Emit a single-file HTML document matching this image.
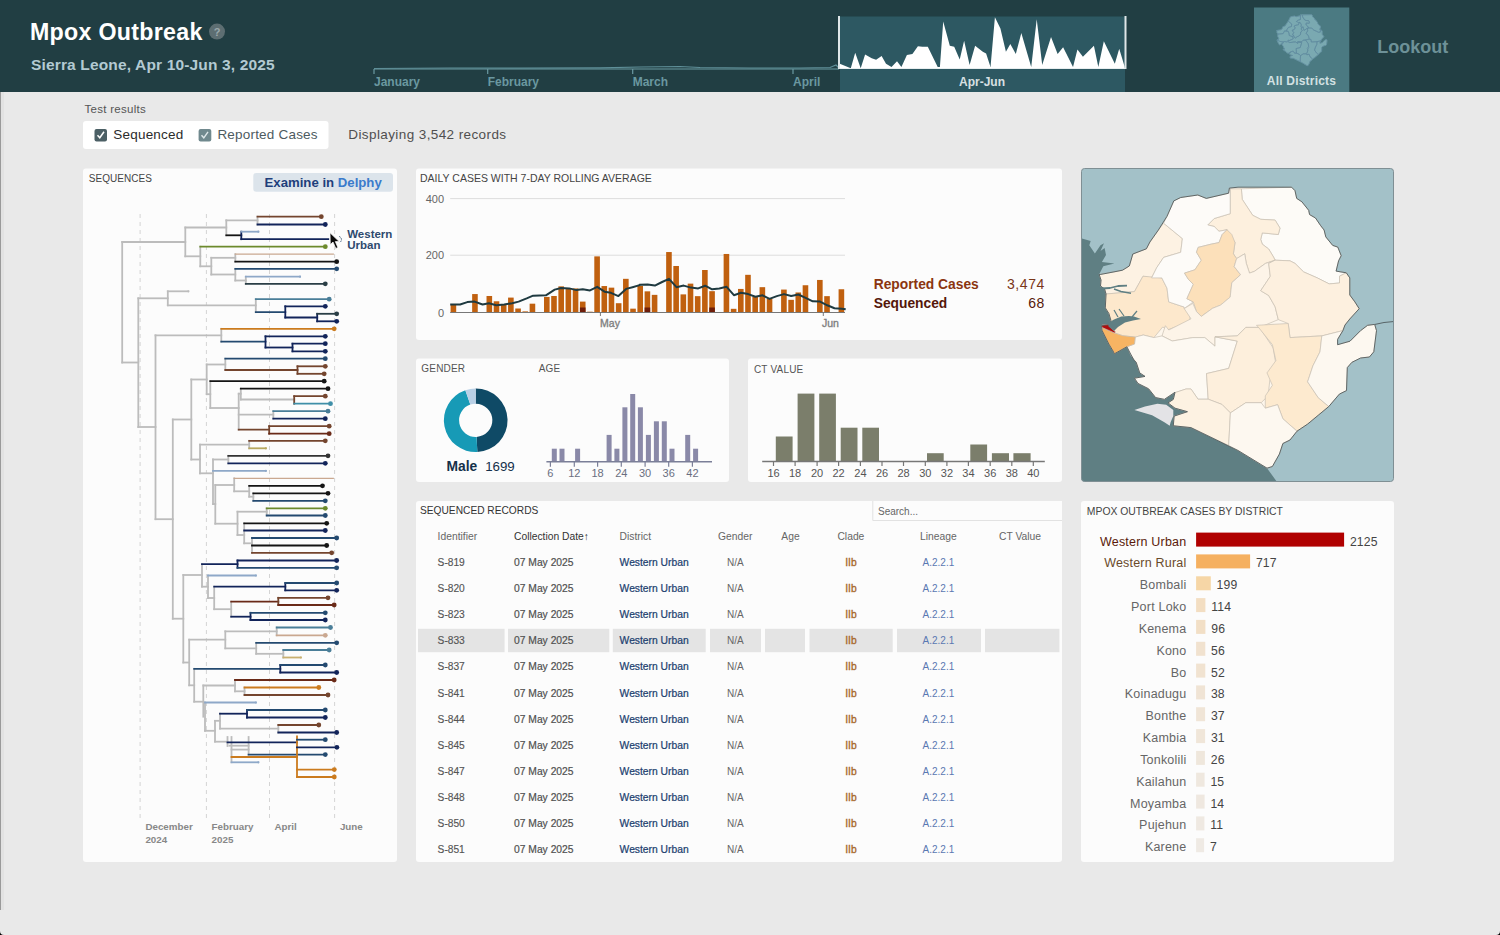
<!DOCTYPE html>
<html><head><meta charset="utf-8"><style>
html,body{margin:0;padding:0;}
body{width:1500px;height:935px;overflow:hidden;background:#e9e9e9;font-family:"Liberation Sans", sans-serif;}
svg{position:absolute;left:0;top:0;}
svg text{font-family:"Liberation Sans", sans-serif;}
</style></head><body>
<svg width="1500" height="935" viewBox="0 0 1500 935">
<rect x="0" y="0" width="1500" height="935" fill="#e9e9e9"/>
<rect x="0" y="0" width="1500" height="92" fill="#213e43"/>
<text x="30" y="39.7" font-size="23.2" fill="#ffffff" font-weight="700" letter-spacing="0.3">Mpox Outbreak</text>
<circle cx="217" cy="31.6" r="8" fill="#5d6e72"/>
<text x="217" y="36" font-size="11" fill="#9aa8ab" font-weight="700" text-anchor="middle">?</text>
<text x="31" y="70" font-size="15.5" fill="#b3cad2" font-weight="700" letter-spacing="0.15">Sierra Leone, Apr 10-Jun 3, 2025</text>
<line x1="374" y1="69" x2="839" y2="69" stroke="#6b9aa2" stroke-width="1.2"/>
<line x1="374" y1="69" x2="374" y2="74" stroke="#6b9aa2" stroke-width="1.2"/>
<line x1="487.7" y1="69" x2="487.7" y2="74" stroke="#6b9aa2" stroke-width="1.2"/>
<line x1="632.7" y1="69" x2="632.7" y2="74" stroke="#6b9aa2" stroke-width="1.2"/>
<line x1="793" y1="69" x2="793" y2="74" stroke="#6b9aa2" stroke-width="1.2"/>
<text x="374" y="85.7" font-size="12" fill="#6a98a0" font-weight="700">January</text>
<text x="487.7" y="85.7" font-size="12" fill="#6a98a0" font-weight="700">February</text>
<text x="632.7" y="85.7" font-size="12" fill="#6a98a0" font-weight="700">March</text>
<text x="793" y="85.7" font-size="12" fill="#6a98a0" font-weight="700">April</text>
<polyline points="374,68.5 450,68 520,68.2 600,67.8 640,67 680,66.5 700,67.5 750,68 800,68 830,67.5 836,65 839,68" fill="none" stroke="#5f8f98" stroke-width="1.2"/>
<rect x="840" y="16.5" width="285" height="75.5" fill="#2d5862"/>
<polygon points="839.8019801980198,68.5 839.8019801980198,63.80638063806381 850.8030803080308,68.20682068206821 855.2035203520352,52.805280528052805 860.7040704070407,68.20682068206821 865.1045104510451,54.56545654565457 871.7051705170517,58.30583058305831 876.1056105610561,59.84598459845985 881.6061606160616,56.1056105610561 886.006600660066,63.80638063806381 891.5071507150715,67.1067106710671 897.007700770077,61.16611661166117 901.4081408140814,67.1067106710671 906.908690869087,55.005500550055004 912.4092409240924,53.905390539053904 917.9097909790979,46.20462046204621 922.3102310231023,46.864686468646866 927.8107810781078,46.864686468646866 937.7117711771177,67.1067106710671 939.9119911991199,67.1067106710671 943.2123212321233,21.562156215621563 949.8129812981298,45.76457645764577 954.2134213421342,46.64466446644664 959.7139713971397,59.40594059405941 964.1144114411441,40.7040704070407 969.6149614961496,64.9064906490649 975.1155115511551,45.76457645764577 982.8162816281629,51.705170517051705 986.1166116611662,53.46534653465346 990.5170517051705,67.1067106710671 994.9174917491749,17.16171617161716 1000.4180418041805,28.602860286028605 1005.9185918591859,51.705170517051705 1010.3190319031903,44.004400440044 1015.8195819581958,53.905390539053904 1021.3201320132014,33.00330033003301 1031.221122112211,67.1067106710671 1036.7216721672166,19.36193619361936 1042.2222222222222,64.9064906490649 1051.023102310231,36.96369636963696 1057.6237623762377,53.905390539053904 1063.1243124312432,47.30473047304731 1073.0253025302532,67.1067106710671 1077.4257425742574,49.504950495049506 1082.926292629263,56.76567656765677 1093.927392739274,45.76457645764577 1098.3278327832784,67.1067106710671 1103.828382838284,41.36413641364136 1114.8294829482948,63.80638063806381 1119.2299229922992,48.84488448844885 1124.7304730473047,67.1067106710671 1124.7304730473047,68.5" fill="#ffffff"/>
<line x1="838" y1="68.5" x2="1126" y2="68.5" stroke="#e8eeef" stroke-width="1"/>
<line x1="839" y1="16" x2="839" y2="69" stroke="#dfe6e8" stroke-width="2"/>
<line x1="1125.5" y1="16" x2="1125.5" y2="69" stroke="#dfe6e8" stroke-width="2"/>
<text x="982" y="85.8" font-size="12" fill="#d8e0e2" font-weight="700" text-anchor="middle">Apr-Jun</text>
<rect x="1254" y="7.5" width="95.3" height="84.5" fill="#4b7a82"/>
<g transform="translate(1276.8,14.7) scale(0.1816,0.1815) translate(-1100,-187.2)"><polygon points="1100.2,274.5 1113.9,271.9 1122.5,270.2 1129.3,266 1132.8,254 1146.4,248.8 1149.9,242 1158.4,230 1167,216.3 1173.8,200.9 1180.7,197.5 1197.8,195 1206.3,198.4 1228.6,193.2 1229.4,188.1 1238,187.2 1291.6,187.2 1295,190.7 1296.7,198.4 1301.9,201.8 1308.7,210.3 1309.6,214.6 1315.5,218 1320.7,225.7 1324.1,230 1325.8,236.9 1332.7,245.4 1337.8,247.1 1341.2,255.7 1338.6,260.8 1336.1,271.1 1346.3,272.8 1349.8,277.9 1349.8,295 1354.9,301.9 1359.2,308.7 1349.8,319 1345,325 1342.9,330.6 1337.6,339.4 1337.6,344.7 1350,341.2 1360.6,330.6 1367.6,325.3 1374.7,324.4 1376.5,330.6 1373.8,351.8 1369.4,357 1360.6,358 1351.8,362.4 1347.3,367.6 1346.5,390.6 1339.4,394.1 1328.8,406.5 1318.2,415.3 1307.6,424.1 1297,431.2 1290,440 1282.9,443.5 1279.4,454.1 1272.4,466.5 1267,468.2 1238,450.5 1190.9,427.6 1173.3,425.8 1174.1,416.1 1187.4,411.7 1175,408.2 1168,402.9 1173.3,399.4 1175,392.3 1164.4,399.4 1155.6,397.6 1148.6,388.8 1138,383.5 1134.4,378.2 1145,376.4 1139.7,372.9 1136.2,362.3 1133.9,360 1129,351 1126.9,346.8 1114.4,353.8 1113,351 1108.8,344 1101.9,330.1 1101.5,325.5 1108.8,324.6 1110.9,320.4 1108.8,313.4 1105.3,307.9 1106,294 1104.6,289 1100.5,286 1101,280 1099.1,274.5" fill="#7aa9b1" stroke="#78a6ae" stroke-width="3"/><polygon points="1099.1,274.5 1113.9,271.9 1122.5,270.2 1129.3,266 1132.8,254 1146.4,248.8 1149.9,242 1158.4,230 1163.6,223.2 1182.4,238.6 1180.7,252.3 1163.6,257.4 1156.7,267.7 1151.6,277.9 1143,276.2 1134.5,291.6 1106,294 1104.6,289 1100.5,286 1101,280" fill="none" stroke="#5f8a9e" stroke-width="3.5"/><polygon points="1106,294 1134.5,291.6 1143,276.2 1161.8,277.9 1167,288.2 1168.7,301.9 1184.1,307 1191,313.9 1189,322 1168,329.7 1162.7,327 1153.9,337.6 1143.3,335 1135.2,337.1 1122.7,335.7 1114.4,332.9 1101.9,327.4 1101.5,325.5 1108.8,324.6 1110.9,320.4 1108.8,313.4 1105.3,307.9" fill="none" stroke="#5f8a9e" stroke-width="3.5"/><polygon points="1241.4,188.8 1291.6,187.2 1295,190.7 1296.7,198.4 1301.9,201.8 1308.7,210.3 1309.6,214.6 1315.5,218 1320.7,225.7 1324.1,230 1325.8,236.9 1332.7,245.4 1337.8,247.1 1341.2,255.7 1338.6,260.8 1336.1,271.1 1346.3,272.8 1339.5,276.2 1339.5,283 1329.2,283.9 1317.3,277.9 1303.6,271.9 1295,263.4 1289.9,260.8 1275.1,260.2 1273.5,257 1268.7,249 1262.3,244.2 1260.7,239.4 1262.3,232.9 1278.3,234.5 1280,228.1 1275.1,220.1 1260.7,219.3 1252.7,215.3 1242.2,199.3" fill="none" stroke="#5f8a9e" stroke-width="3.5"/><polygon points="1230.2,188.8 1241.4,188.8 1242.2,199.3 1252.7,215.3 1260.7,219.3 1275.1,220.1 1280,228.1 1278.3,234.5 1262.3,232.9 1260.7,239.4 1262.3,244.2 1268.7,249 1273.5,257 1275.1,260.2 1265.5,263.4 1254.3,271.4 1249.5,273.1 1246.3,263.4 1244.7,253.8 1236.6,258.6 1233.4,253.8 1235,242.6 1227,229.7 1219,231.3 1214.2,226.5 1207.8,224.9 1214.2,218.5 1230.2,213.7" fill="none" stroke="#5f8a9e" stroke-width="3.5"/><polygon points="1167,216.3 1173.8,200.9 1180.7,197.5 1197.8,195 1206.3,198.4 1228.6,193.2 1229.4,188.1 1230.2,188.8 1230.2,213.7 1214.2,218.5 1207.8,224.9 1214.2,226.5 1219,231.3 1227,229.7 1222.2,234.5 1219,242.6 1211,244.2 1198.1,247.4 1196.5,252.2 1201.3,260.2 1194.9,269.8 1184.5,273.1 1188.5,279.5 1193.3,284.3 1186.9,298.7 1193.3,301.9 1184.2,308.6 1184.1,307 1168.7,301.9 1167,288.2 1161.8,277.9 1151.6,277.9 1156.7,267.7 1163.6,257.4 1180.7,252.3 1182.4,238.6 1163.6,223.2" fill="none" stroke="#5f8a9e" stroke-width="3.5"/><polygon points="1227,229.7 1231.8,234.5 1235,242.6 1233.4,253.8 1236.6,258.6 1234.2,266.6 1240.6,274.7 1231.8,282.7 1230.2,297.1 1220.6,305.1 1212.6,308.3 1201.3,316.4 1196.5,311.6 1193.3,301.9 1186.9,298.7 1193.3,284.3 1188.5,279.5 1184.5,273.1 1194.9,269.8 1201.3,260.2 1196.5,252.2 1198.1,247.4 1211,244.2 1219,242.6 1222.2,234.5" fill="none" stroke="#5f8a9e" stroke-width="3.5"/><polygon points="1162,335.9 1165.4,325.7 1168.8,330 1191,318.8 1184.2,308.6 1192.8,303.4 1196.5,311.6 1201.3,316.4 1212.6,308.3 1220.6,305.1 1230.2,297.1 1231.8,282.7 1240.6,274.7 1234.2,266.6 1236.6,258.6 1244.7,253.8 1246.3,263.4 1249.5,273.1 1254.3,271.4 1265.5,263.4 1275.1,260.2 1268.7,263.4 1270.3,276.3 1260.7,290.7 1268.7,295.5 1275.1,306.7 1278.3,319.6 1259.5,327.4 1245.8,327.4 1237.3,335.9 1215,336.8 1215,346.2 1204.8,337.6 1192.8,337.6 1172.2,341" fill="none" stroke="#5f8a9e" stroke-width="3.5"/><polygon points="1275.1,260.2 1289.9,260.8 1295,263.4 1303.6,271.9 1317.3,277.9 1329.2,283.9 1339.5,283 1339.5,276.2 1346.3,272.8 1349.8,277.9 1349.8,295 1354.9,301.9 1359.2,308.7 1349.8,319 1345,325 1342.9,330.6 1321.8,335.9 1290,337.6 1288.2,323.5 1278.3,319.6 1275.1,306.7 1268.7,295.5 1260.7,290.7 1270.3,276.3 1268.7,263.4" fill="none" stroke="#5f8a9e" stroke-width="3.5"/><polygon points="1129,351 1126.9,346.8 1134.5,344 1135.2,337.1 1143.3,335 1153.9,337.6 1162,335.9 1172.2,341 1192.8,337.6 1204.8,337.6 1215,346.2 1215,336.8 1237.3,341.1 1228.7,368.4 1206.5,373.6 1208.2,399.2 1198,399.2 1191,389 1186,389 1175.7,392.4 1175,392.3 1164.4,399.4 1155.6,397.6 1148.6,388.8 1138,383.5 1134.4,378.2 1145,376.4 1139.7,372.9 1136.2,362.3 1130.9,355.3" fill="none" stroke="#5f8a9e" stroke-width="3.5"/><polygon points="1215,336.8 1237.3,341.1 1228.7,368.4 1206.5,373.6 1208.2,399.2 1221.9,404.4 1230.4,412.9 1245.8,402.7 1261.2,402.7 1268.1,395.8 1269.8,380.4 1276.6,368.4 1273.2,347.9 1259.5,327.4 1245.8,327.4 1237.3,335.9" fill="none" stroke="#5f8a9e" stroke-width="3.5"/><polygon points="1256.5,325.3 1288.2,323.5 1290,337.6 1321.8,335.9 1320,351.8 1312.9,365.9 1307.6,381.8 1318.2,397.6 1328.8,406.5 1318.2,415.3 1307.6,424.1 1297,431.2 1282.9,418.8 1277.6,404.7 1265.3,408.2 1265.3,395.9 1272.4,385.3 1267,372.9 1275.9,360.6 1272.4,344.7 1258.2,327" fill="none" stroke="#5f8a9e" stroke-width="3.5"/><polygon points="1321.8,335.9 1342.9,330.6 1337.6,339.4 1337.6,344.7 1350,341.2 1360.6,330.6 1367.6,325.3 1374.7,324.4 1376.5,330.6 1373.8,351.8 1369.4,357 1360.6,358 1351.8,362.4 1347.3,367.6 1346.5,390.6 1339.4,394.1 1328.8,406.5 1318.2,397.6 1307.6,381.8 1312.9,365.9 1320,351.8" fill="none" stroke="#5f8a9e" stroke-width="3.5"/><polygon points="1175.7,392.4 1186,389 1191,389 1198,399.2 1208.2,399.2 1221.9,404.4 1230.4,412.9 1228.7,445.5 1190.9,427.6 1173.3,425.8 1174.1,416.1 1187.4,411.7 1175,408.2 1168,402.9 1173.3,399.4 1175,392.3" fill="none" stroke="#5f8a9e" stroke-width="3.5"/><polygon points="1230.4,412.9 1245.8,402.7 1261.2,402.7 1265.3,408.2 1277.6,404.7 1282.9,418.8 1297,431.2 1290,440 1282.9,443.5 1279.4,454.1 1272.4,466.5 1267,468.2 1238,450.5 1228.7,445.5" fill="none" stroke="#5f8a9e" stroke-width="3.5"/><polygon points="1101.9,327.4 1114.4,332.9 1122.7,335.7 1135.2,337.1 1134.5,344 1126.9,346.8 1114.4,353.8 1113,351 1108.8,344 1101.9,330.1" fill="none" stroke="#5f8a9e" stroke-width="3.5"/></g>
<text x="1301.5" y="84.8" font-size="12" fill="#d3e1e3" font-weight="700" text-anchor="middle" letter-spacing="0.2">All Districts</text>
<text x="1412.8" y="52.8" font-size="18" fill="#6d9198" font-weight="700" text-anchor="middle">Lookout</text>
<text x="84.4" y="112.7" font-size="11.5" fill="#555555" font-weight="400" letter-spacing="0.3">Test results</text>
<rect x="83" y="121" width="245.5" height="28" rx="3" fill="#ffffff"/>
<rect x="94.5" y="129" width="12.5" height="12.5" rx="2" fill="#4b5f65"/>
<path d="M97.5 135.3 L99.8 137.8 L104 131.8" fill="none" stroke="#ffffff" stroke-width="1.5"/>
<text x="113.3" y="138.8" font-size="13.5" fill="#2b2b2b" font-weight="400" letter-spacing="0.2">Sequenced</text>
<rect x="198.6" y="129" width="12.7" height="12.5" rx="2" fill="#70898e"/>
<path d="M201.5 135.3 L203.8 137.8 L208 131.8" fill="none" stroke="#dfe8ea" stroke-width="1.4"/>
<text x="217.4" y="138.8" font-size="13.5" fill="#4d5b5f" font-weight="400" letter-spacing="0.2">Reported Cases</text>
<text x="348.3" y="138.8" font-size="13.5" fill="#4f4f4f" font-weight="400" letter-spacing="0.4">Displaying 3,542 records</text>
<rect x="83" y="168.5" width="314" height="693.5" rx="3" fill="#fcfcfc"/>
<rect x="416" y="168.5" width="646" height="171.5" rx="3" fill="#fcfcfc"/>
<rect x="416" y="358.5" width="313" height="123.5" rx="3" fill="#fcfcfc"/>
<rect x="748" y="358.5" width="314" height="123.5" rx="3" fill="#fcfcfc"/>
<rect x="416" y="501" width="646" height="361" rx="3" fill="#fcfcfc"/>
<rect x="1081" y="501" width="313" height="361" rx="3" fill="#fcfcfc"/>
<text x="88.7" y="182" font-size="10" fill="#444444" font-weight="400" letter-spacing="0.05">SEQUENCES</text>
<rect x="253.3" y="173" width="139.7" height="18.7" rx="3" fill="#dce4eb"/>
<text x="264.5" y="186.9" font-size="13.2" font-weight="700" letter-spacing="0"><tspan fill="#1f3f7c">Examine in </tspan><tspan fill="#3a7bcc">Delphy</tspan></text>
<line x1="140.1" y1="214" x2="140.1" y2="819" stroke="#d4d4d4" stroke-width="1" stroke-dasharray="4 4"/>
<line x1="206.4" y1="214" x2="206.4" y2="819" stroke="#d4d4d4" stroke-width="1" stroke-dasharray="4 4"/>
<line x1="269.5" y1="214" x2="269.5" y2="819" stroke="#d4d4d4" stroke-width="1" stroke-dasharray="4 4"/>
<line x1="334.6" y1="214" x2="334.6" y2="819" stroke="#d4d4d4" stroke-width="1" stroke-dasharray="4 4"/>
<line x1="122.2" y1="242" x2="122.2" y2="362.5" stroke="#bcbcbc" stroke-width="1.8" stroke-linecap="square"/>
<line x1="122.2" y1="242" x2="185.3" y2="242" stroke="#bcbcbc" stroke-width="1.8" stroke-linecap="square"/>
<line x1="185.3" y1="227.5" x2="185.3" y2="256.3" stroke="#bcbcbc" stroke-width="1.8" stroke-linecap="square"/>
<line x1="185.3" y1="227.5" x2="226.3" y2="227.5" stroke="#bcbcbc" stroke-width="1.8" stroke-linecap="square"/>
<line x1="226.3" y1="220.3" x2="226.3" y2="235.3" stroke="#bcbcbc" stroke-width="1.8" stroke-linecap="square"/>
<line x1="226.3" y1="220.3" x2="257.5" y2="220.3" stroke="#bcbcbc" stroke-width="1.8" stroke-linecap="square"/>
<line x1="257.5" y1="216.7" x2="257.5" y2="224.5" stroke="#bcbcbc" stroke-width="1.8" stroke-linecap="square"/>
<line x1="185.3" y1="256.3" x2="200.3" y2="256.3" stroke="#bcbcbc" stroke-width="1.8" stroke-linecap="square"/>
<line x1="200.3" y1="246.7" x2="200.3" y2="266.3" stroke="#bcbcbc" stroke-width="1.8" stroke-linecap="square"/>
<line x1="200.3" y1="266.3" x2="211.3" y2="266.3" stroke="#bcbcbc" stroke-width="1.8" stroke-linecap="square"/>
<line x1="211.3" y1="257.8" x2="211.3" y2="274.5" stroke="#bcbcbc" stroke-width="1.8" stroke-linecap="square"/>
<line x1="211.3" y1="257.8" x2="235.3" y2="257.8" stroke="#bcbcbc" stroke-width="1.8" stroke-linecap="square"/>
<line x1="235.3" y1="254.2" x2="235.3" y2="261.7" stroke="#bcbcbc" stroke-width="1.8" stroke-linecap="square"/>
<line x1="211.3" y1="274.5" x2="235.3" y2="274.5" stroke="#bcbcbc" stroke-width="1.8" stroke-linecap="square"/>
<line x1="235.3" y1="268.8" x2="235.3" y2="280.5" stroke="#bcbcbc" stroke-width="1.8" stroke-linecap="square"/>
<line x1="235.3" y1="280.5" x2="245.8" y2="280.5" stroke="#bcbcbc" stroke-width="1.8" stroke-linecap="square"/>
<line x1="245.8" y1="276.7" x2="245.8" y2="283.8" stroke="#bcbcbc" stroke-width="1.8" stroke-linecap="square"/>
<line x1="122.2" y1="362.5" x2="138.3" y2="362.5" stroke="#bcbcbc" stroke-width="1.8" stroke-linecap="square"/>
<line x1="138.3" y1="298.3" x2="138.3" y2="427" stroke="#bcbcbc" stroke-width="1.8" stroke-linecap="square"/>
<line x1="138.3" y1="298.3" x2="167.8" y2="298.3" stroke="#bcbcbc" stroke-width="1.8" stroke-linecap="square"/>
<line x1="167.8" y1="291.3" x2="167.8" y2="305.3" stroke="#bcbcbc" stroke-width="1.8" stroke-linecap="square"/>
<line x1="167.8" y1="291.3" x2="188.3" y2="291.3" stroke="#bcbcbc" stroke-width="1.8" stroke-linecap="square"/>
<line x1="167.8" y1="305.3" x2="255.8" y2="305.3" stroke="#bcbcbc" stroke-width="1.8" stroke-linecap="square"/>
<line x1="255.8" y1="299.2" x2="255.8" y2="312.2" stroke="#bcbcbc" stroke-width="1.8" stroke-linecap="square"/>
<line x1="138.3" y1="427" x2="155.5" y2="427" stroke="#bcbcbc" stroke-width="1.8" stroke-linecap="square"/>
<line x1="155.5" y1="335.3" x2="155.5" y2="519.2" stroke="#bcbcbc" stroke-width="1.8" stroke-linecap="square"/>
<line x1="155.5" y1="335.3" x2="221.3" y2="335.3" stroke="#bcbcbc" stroke-width="1.8" stroke-linecap="square"/>
<line x1="221.3" y1="328.8" x2="221.3" y2="341.7" stroke="#bcbcbc" stroke-width="1.8" stroke-linecap="square"/>
<line x1="155.5" y1="519.2" x2="172.8" y2="519.2" stroke="#bcbcbc" stroke-width="1.8" stroke-linecap="square"/>
<line x1="172.8" y1="419.5" x2="172.8" y2="618.7" stroke="#bcbcbc" stroke-width="1.8" stroke-linecap="square"/>
<line x1="172.8" y1="419.5" x2="191.3" y2="419.5" stroke="#bcbcbc" stroke-width="1.8" stroke-linecap="square"/>
<line x1="191.3" y1="379.5" x2="191.3" y2="459.5" stroke="#bcbcbc" stroke-width="1.8" stroke-linecap="square"/>
<line x1="191.3" y1="379.5" x2="206.7" y2="379.5" stroke="#bcbcbc" stroke-width="1.8" stroke-linecap="square"/>
<line x1="206.7" y1="364.5" x2="206.7" y2="394.2" stroke="#bcbcbc" stroke-width="1.8" stroke-linecap="square"/>
<line x1="206.7" y1="364.5" x2="225.3" y2="364.5" stroke="#bcbcbc" stroke-width="1.8" stroke-linecap="square"/>
<line x1="225.3" y1="358.7" x2="225.3" y2="370" stroke="#bcbcbc" stroke-width="1.8" stroke-linecap="square"/>
<line x1="206.7" y1="394.2" x2="210.3" y2="394.2" stroke="#bcbcbc" stroke-width="1.8" stroke-linecap="square"/>
<line x1="210.3" y1="381.2" x2="210.3" y2="408" stroke="#bcbcbc" stroke-width="1.8" stroke-linecap="square"/>
<line x1="210.3" y1="408" x2="238.7" y2="408" stroke="#bcbcbc" stroke-width="1.8" stroke-linecap="square"/>
<line x1="238.7" y1="393.7" x2="238.7" y2="429.7" stroke="#bcbcbc" stroke-width="1.8" stroke-linecap="square"/>
<line x1="240.8" y1="388.7" x2="240.8" y2="399.5" stroke="#bcbcbc" stroke-width="1.8" stroke-linecap="square"/>
<line x1="238.7" y1="393.7" x2="240.8" y2="393.7" stroke="#bcbcbc" stroke-width="1.8" stroke-linecap="square"/>
<line x1="240.8" y1="399.5" x2="294.2" y2="399.5" stroke="#bcbcbc" stroke-width="1.8" stroke-linecap="square"/>
<line x1="238.7" y1="414.7" x2="273.3" y2="414.7" stroke="#bcbcbc" stroke-width="1.8" stroke-linecap="square"/>
<line x1="273.3" y1="411.2" x2="273.3" y2="418.7" stroke="#bcbcbc" stroke-width="1.8" stroke-linecap="square"/>
<line x1="191.3" y1="459.5" x2="200" y2="459.5" stroke="#bcbcbc" stroke-width="1.8" stroke-linecap="square"/>
<line x1="200" y1="444.7" x2="200" y2="473.3" stroke="#bcbcbc" stroke-width="1.8" stroke-linecap="square"/>
<line x1="200" y1="444.7" x2="249.2" y2="444.7" stroke="#bcbcbc" stroke-width="1.8" stroke-linecap="square"/>
<line x1="249.2" y1="440.8" x2="249.2" y2="448.3" stroke="#bcbcbc" stroke-width="1.8" stroke-linecap="square"/>
<line x1="200" y1="473.3" x2="213" y2="473.3" stroke="#bcbcbc" stroke-width="1.8" stroke-linecap="square"/>
<line x1="213" y1="459.5" x2="213" y2="504" stroke="#bcbcbc" stroke-width="1.8" stroke-linecap="square"/>
<line x1="213" y1="459.5" x2="228.3" y2="459.5" stroke="#bcbcbc" stroke-width="1.8" stroke-linecap="square"/>
<line x1="228.3" y1="455.8" x2="228.3" y2="463.3" stroke="#bcbcbc" stroke-width="1.8" stroke-linecap="square"/>
<line x1="213" y1="504" x2="215.3" y2="504" stroke="#bcbcbc" stroke-width="1.8" stroke-linecap="square"/>
<line x1="215.3" y1="485" x2="215.3" y2="523.7" stroke="#bcbcbc" stroke-width="1.8" stroke-linecap="square"/>
<line x1="215.3" y1="485" x2="234.2" y2="485" stroke="#bcbcbc" stroke-width="1.8" stroke-linecap="square"/>
<line x1="234.2" y1="478.3" x2="234.2" y2="491.3" stroke="#bcbcbc" stroke-width="1.8" stroke-linecap="square"/>
<line x1="234.2" y1="491.3" x2="249.2" y2="491.3" stroke="#bcbcbc" stroke-width="1.8" stroke-linecap="square"/>
<line x1="249.2" y1="485.8" x2="249.2" y2="496.7" stroke="#bcbcbc" stroke-width="1.8" stroke-linecap="square"/>
<line x1="249.2" y1="496.7" x2="253.3" y2="496.7" stroke="#bcbcbc" stroke-width="1.8" stroke-linecap="square"/>
<line x1="253.3" y1="493.3" x2="253.3" y2="500.8" stroke="#bcbcbc" stroke-width="1.8" stroke-linecap="square"/>
<line x1="215.3" y1="523.7" x2="237.5" y2="523.7" stroke="#bcbcbc" stroke-width="1.8" stroke-linecap="square"/>
<line x1="237.5" y1="511.7" x2="237.5" y2="535" stroke="#bcbcbc" stroke-width="1.8" stroke-linecap="square"/>
<line x1="237.5" y1="511.7" x2="266.7" y2="511.7" stroke="#bcbcbc" stroke-width="1.8" stroke-linecap="square"/>
<line x1="266.7" y1="508.3" x2="266.7" y2="515.5" stroke="#bcbcbc" stroke-width="1.8" stroke-linecap="square"/>
<line x1="237.5" y1="535" x2="244.2" y2="535" stroke="#bcbcbc" stroke-width="1.8" stroke-linecap="square"/>
<line x1="244.2" y1="523.3" x2="244.2" y2="543.3" stroke="#bcbcbc" stroke-width="1.8" stroke-linecap="square"/>
<line x1="244.2" y1="543.3" x2="252" y2="543.3" stroke="#bcbcbc" stroke-width="1.8" stroke-linecap="square"/>
<line x1="252" y1="538" x2="252" y2="552.8" stroke="#bcbcbc" stroke-width="1.8" stroke-linecap="square"/>
<line x1="172.8" y1="618.7" x2="183.3" y2="618.7" stroke="#bcbcbc" stroke-width="1.8" stroke-linecap="square"/>
<line x1="183.3" y1="575" x2="183.3" y2="662.5" stroke="#bcbcbc" stroke-width="1.8" stroke-linecap="square"/>
<line x1="183.3" y1="575" x2="202" y2="575" stroke="#bcbcbc" stroke-width="1.8" stroke-linecap="square"/>
<line x1="202" y1="564.2" x2="202" y2="586.7" stroke="#bcbcbc" stroke-width="1.8" stroke-linecap="square"/>
<line x1="202" y1="586.7" x2="208" y2="586.7" stroke="#bcbcbc" stroke-width="1.8" stroke-linecap="square"/>
<line x1="208" y1="575.5" x2="208" y2="598" stroke="#bcbcbc" stroke-width="1.8" stroke-linecap="square"/>
<line x1="208" y1="598" x2="214.2" y2="598" stroke="#bcbcbc" stroke-width="1.8" stroke-linecap="square"/>
<line x1="214.2" y1="586.7" x2="214.2" y2="609.2" stroke="#bcbcbc" stroke-width="1.8" stroke-linecap="square"/>
<line x1="214.2" y1="609.2" x2="231.2" y2="609.2" stroke="#bcbcbc" stroke-width="1.8" stroke-linecap="square"/>
<line x1="231.2" y1="601.7" x2="231.2" y2="616.7" stroke="#bcbcbc" stroke-width="1.8" stroke-linecap="square"/>
<line x1="183.3" y1="662.5" x2="189.2" y2="662.5" stroke="#bcbcbc" stroke-width="1.8" stroke-linecap="square"/>
<line x1="189.2" y1="639.7" x2="189.2" y2="685.3" stroke="#bcbcbc" stroke-width="1.8" stroke-linecap="square"/>
<line x1="189.2" y1="639.7" x2="225.3" y2="639.7" stroke="#bcbcbc" stroke-width="1.8" stroke-linecap="square"/>
<line x1="225.3" y1="631.3" x2="225.3" y2="648.3" stroke="#bcbcbc" stroke-width="1.8" stroke-linecap="square"/>
<line x1="225.3" y1="631.3" x2="276.7" y2="631.3" stroke="#bcbcbc" stroke-width="1.8" stroke-linecap="square"/>
<line x1="276.7" y1="627.5" x2="276.7" y2="635.3" stroke="#bcbcbc" stroke-width="1.8" stroke-linecap="square"/>
<line x1="225.3" y1="648.3" x2="256.2" y2="648.3" stroke="#bcbcbc" stroke-width="1.8" stroke-linecap="square"/>
<line x1="256.2" y1="642.8" x2="256.2" y2="653.8" stroke="#bcbcbc" stroke-width="1.8" stroke-linecap="square"/>
<line x1="256.2" y1="653.8" x2="283.3" y2="653.8" stroke="#bcbcbc" stroke-width="1.8" stroke-linecap="square"/>
<line x1="283.3" y1="650" x2="283.3" y2="657.5" stroke="#bcbcbc" stroke-width="1.8" stroke-linecap="square"/>
<line x1="189.2" y1="685.3" x2="194.2" y2="685.3" stroke="#bcbcbc" stroke-width="1.8" stroke-linecap="square"/>
<line x1="194.2" y1="668.8" x2="194.2" y2="701.7" stroke="#bcbcbc" stroke-width="1.8" stroke-linecap="square"/>
<line x1="194.2" y1="701.7" x2="203.3" y2="701.7" stroke="#bcbcbc" stroke-width="1.8" stroke-linecap="square"/>
<line x1="203.3" y1="685.5" x2="203.3" y2="716.7" stroke="#bcbcbc" stroke-width="1.8" stroke-linecap="square"/>
<line x1="205" y1="702.5" x2="205" y2="730.8" stroke="#bcbcbc" stroke-width="1.8" stroke-linecap="square"/>
<line x1="203.3" y1="685.5" x2="235" y2="685.5" stroke="#bcbcbc" stroke-width="1.8" stroke-linecap="square"/>
<line x1="235" y1="680" x2="235" y2="691.3" stroke="#bcbcbc" stroke-width="1.8" stroke-linecap="square"/>
<line x1="235" y1="691.3" x2="244.5" y2="691.3" stroke="#bcbcbc" stroke-width="1.8" stroke-linecap="square"/>
<line x1="244.5" y1="687.5" x2="244.5" y2="695" stroke="#bcbcbc" stroke-width="1.8" stroke-linecap="square"/>
<line x1="205" y1="730.8" x2="215" y2="730.8" stroke="#bcbcbc" stroke-width="1.8" stroke-linecap="square"/>
<line x1="215" y1="720.8" x2="215" y2="741.7" stroke="#bcbcbc" stroke-width="1.8" stroke-linecap="square"/>
<line x1="215" y1="720.8" x2="220" y2="720.8" stroke="#bcbcbc" stroke-width="1.8" stroke-linecap="square"/>
<line x1="220" y1="713.7" x2="220" y2="728.7" stroke="#bcbcbc" stroke-width="1.8" stroke-linecap="square"/>
<line x1="220" y1="728.7" x2="278.3" y2="728.7" stroke="#bcbcbc" stroke-width="1.8" stroke-linecap="square"/>
<line x1="278.3" y1="725" x2="278.3" y2="732.5" stroke="#bcbcbc" stroke-width="1.8" stroke-linecap="square"/>
<line x1="215" y1="741.7" x2="227.5" y2="741.7" stroke="#bcbcbc" stroke-width="1.8" stroke-linecap="square"/>
<line x1="227.5" y1="737" x2="227.5" y2="746" stroke="#bcbcbc" stroke-width="1.8" stroke-linecap="square"/>
<line x1="231.5" y1="737" x2="231.5" y2="762.3" stroke="#bcbcbc" stroke-width="1.8" stroke-linecap="square"/>
<line x1="248.6" y1="737" x2="248.6" y2="754.6" stroke="#bcbcbc" stroke-width="1.8" stroke-linecap="square"/>
<line x1="229.5" y1="745.7" x2="248.6" y2="745.7" stroke="#bcbcbc" stroke-width="1.8" stroke-linecap="square"/>
<line x1="231.5" y1="749.6" x2="248.6" y2="749.6" stroke="#bcbcbc" stroke-width="1.8" stroke-linecap="square"/>
<line x1="257.5" y1="216.7" x2="321.3" y2="216.7" stroke="#74452e" stroke-width="1.8" stroke-linecap="square"/>
<line x1="257.5" y1="224.5" x2="325.3" y2="224.5" stroke="#12245a" stroke-width="1.8" stroke-linecap="square"/>
<line x1="226.3" y1="235.3" x2="241.3" y2="235.3" stroke="#141414" stroke-width="1.8" stroke-linecap="square"/>
<line x1="241.3" y1="231.7" x2="241.3" y2="239.2" stroke="#12245a" stroke-width="1.8" stroke-linecap="square"/>
<line x1="241.3" y1="231.7" x2="258.3" y2="231.7" stroke="#8ea8c8" stroke-width="1.8" stroke-linecap="square"/>
<line x1="241.3" y1="239.2" x2="328.3" y2="239.2" stroke="#12245a" stroke-width="1.8" stroke-linecap="square"/>
<line x1="200.3" y1="246.7" x2="325.3" y2="246.7" stroke="#6c8a2c" stroke-width="1.8" stroke-linecap="square"/>
<line x1="235.3" y1="254.2" x2="333.3" y2="254.2" stroke="#caa890" stroke-width="1.2" stroke-linecap="square"/>
<line x1="235.3" y1="261.7" x2="336.7" y2="261.7" stroke="#141414" stroke-width="1.8" stroke-linecap="square"/>
<line x1="235.3" y1="268.8" x2="336.7" y2="268.8" stroke="#244a70" stroke-width="1.8" stroke-linecap="square"/>
<line x1="245.8" y1="276.7" x2="300" y2="276.7" stroke="#8ea8c8" stroke-width="1.8" stroke-linecap="square"/>
<line x1="245.8" y1="283.8" x2="325.3" y2="283.8" stroke="#2a3e46" stroke-width="1.8" stroke-linecap="square"/>
<line x1="255.8" y1="299.2" x2="329.2" y2="299.2" stroke="#4a7e98" stroke-width="1.8" stroke-linecap="square"/>
<line x1="255.8" y1="312.2" x2="285.3" y2="312.2" stroke="#244a70" stroke-width="1.8" stroke-linecap="square"/>
<line x1="285.3" y1="306.3" x2="285.3" y2="317.5" stroke="#12245a" stroke-width="1.8" stroke-linecap="square"/>
<line x1="285.3" y1="306.3" x2="325.3" y2="306.3" stroke="#12245a" stroke-width="1.8" stroke-linecap="square"/>
<line x1="285.3" y1="317.5" x2="317.2" y2="317.5" stroke="#12245a" stroke-width="1.8" stroke-linecap="square"/>
<line x1="317.2" y1="313.8" x2="317.2" y2="321.3" stroke="#12245a" stroke-width="1.8" stroke-linecap="square"/>
<line x1="317.2" y1="313.8" x2="336.7" y2="313.8" stroke="#2a3e46" stroke-width="1.8" stroke-linecap="square"/>
<line x1="317.2" y1="321.3" x2="336.7" y2="321.3" stroke="#12245a" stroke-width="1.8" stroke-linecap="square"/>
<line x1="221.3" y1="328.8" x2="334.2" y2="328.8" stroke="#cb7b1e" stroke-width="1.8" stroke-linecap="square"/>
<line x1="221.3" y1="341.7" x2="265.5" y2="341.7" stroke="#244a70" stroke-width="1.8" stroke-linecap="square"/>
<line x1="265.5" y1="336.3" x2="265.5" y2="347.5" stroke="#12245a" stroke-width="1.8" stroke-linecap="square"/>
<line x1="265.5" y1="336.3" x2="325.3" y2="336.3" stroke="#12245a" stroke-width="1.8" stroke-linecap="square"/>
<line x1="265.5" y1="347.5" x2="292.5" y2="347.5" stroke="#12245a" stroke-width="1.8" stroke-linecap="square"/>
<line x1="292.5" y1="343.7" x2="292.5" y2="351.3" stroke="#12245a" stroke-width="1.8" stroke-linecap="square"/>
<line x1="292.5" y1="343.7" x2="325.3" y2="343.7" stroke="#12245a" stroke-width="1.8" stroke-linecap="square"/>
<line x1="292.5" y1="351.3" x2="325.3" y2="351.3" stroke="#12245a" stroke-width="1.8" stroke-linecap="square"/>
<line x1="225.3" y1="358.7" x2="325.3" y2="358.7" stroke="#244a70" stroke-width="1.8" stroke-linecap="square"/>
<line x1="225.3" y1="370" x2="297.5" y2="370" stroke="#74452e" stroke-width="1.8" stroke-linecap="square"/>
<line x1="297.5" y1="366.3" x2="297.5" y2="373.8" stroke="#74452e" stroke-width="1.8" stroke-linecap="square"/>
<line x1="297.5" y1="366.3" x2="325.3" y2="366.3" stroke="#74452e" stroke-width="1.8" stroke-linecap="square"/>
<line x1="297.5" y1="373.8" x2="324.2" y2="373.8" stroke="#74452e" stroke-width="1.8" stroke-linecap="square"/>
<line x1="210.3" y1="381.2" x2="324.2" y2="381.2" stroke="#141414" stroke-width="1.8" stroke-linecap="square"/>
<line x1="240.8" y1="388.7" x2="328" y2="388.7" stroke="#141414" stroke-width="1.8" stroke-linecap="square"/>
<line x1="294.2" y1="396.2" x2="294.2" y2="403.7" stroke="#74452e" stroke-width="1.8" stroke-linecap="square"/>
<line x1="294.2" y1="396.2" x2="325.3" y2="396.2" stroke="#74452e" stroke-width="1.8" stroke-linecap="square"/>
<line x1="294.2" y1="403.7" x2="330.5" y2="403.7" stroke="#3f8fa8" stroke-width="1.8" stroke-linecap="square"/>
<line x1="273.3" y1="411.2" x2="328" y2="411.2" stroke="#4a7e98" stroke-width="1.8" stroke-linecap="square"/>
<line x1="273.3" y1="418.7" x2="325.3" y2="418.7" stroke="#12245a" stroke-width="1.8" stroke-linecap="square"/>
<line x1="238.7" y1="429.7" x2="269.2" y2="429.7" stroke="#74452e" stroke-width="1.8" stroke-linecap="square"/>
<line x1="269.2" y1="426.2" x2="269.2" y2="433.7" stroke="#74452e" stroke-width="1.8" stroke-linecap="square"/>
<line x1="269.2" y1="426.2" x2="329.2" y2="426.2" stroke="#74452e" stroke-width="1.8" stroke-linecap="square"/>
<line x1="269.2" y1="433.7" x2="329.2" y2="433.7" stroke="#6a2a18" stroke-width="1.8" stroke-linecap="square"/>
<line x1="249.2" y1="440.8" x2="325.3" y2="440.8" stroke="#74452e" stroke-width="1.8" stroke-linecap="square"/>
<line x1="249.2" y1="448.3" x2="265.8" y2="448.3" stroke="#b8a860" stroke-width="1.8" stroke-linecap="square"/>
<line x1="228.3" y1="455.8" x2="328" y2="455.8" stroke="#333333" stroke-width="1.8" stroke-linecap="square"/>
<line x1="228.3" y1="463.3" x2="325.3" y2="463.3" stroke="#12245a" stroke-width="1.8" stroke-linecap="square"/>
<line x1="213" y1="470.8" x2="265.8" y2="470.8" stroke="#8ea8c8" stroke-width="1.8" stroke-linecap="square"/>
<line x1="234.2" y1="478.3" x2="333.3" y2="478.3" stroke="#caa890" stroke-width="1.2" stroke-linecap="square"/>
<line x1="249.2" y1="485.8" x2="322.5" y2="485.8" stroke="#141414" stroke-width="1.8" stroke-linecap="square"/>
<line x1="253.3" y1="493.3" x2="328" y2="493.3" stroke="#141414" stroke-width="1.8" stroke-linecap="square"/>
<line x1="253.3" y1="500.8" x2="325.3" y2="500.8" stroke="#244a70" stroke-width="1.8" stroke-linecap="square"/>
<line x1="266.7" y1="508.3" x2="325.3" y2="508.3" stroke="#6c8a2c" stroke-width="1.8" stroke-linecap="square"/>
<line x1="266.7" y1="515.5" x2="325.3" y2="515.5" stroke="#244a70" stroke-width="1.8" stroke-linecap="square"/>
<line x1="244.2" y1="523.3" x2="326.7" y2="523.3" stroke="#141414" stroke-width="1.8" stroke-linecap="square"/>
<line x1="244.2" y1="530.5" x2="325.3" y2="530.5" stroke="#12245a" stroke-width="1.8" stroke-linecap="square"/>
<line x1="252" y1="538" x2="336.7" y2="538" stroke="#244a70" stroke-width="1.8" stroke-linecap="square"/>
<line x1="252" y1="545.5" x2="326.7" y2="545.5" stroke="#141414" stroke-width="1.8" stroke-linecap="square"/>
<line x1="252" y1="552.8" x2="331.7" y2="552.8" stroke="#74452e" stroke-width="1.8" stroke-linecap="square"/>
<line x1="202" y1="564.2" x2="237.5" y2="564.2" stroke="#12245a" stroke-width="1.8" stroke-linecap="square"/>
<line x1="237.5" y1="560.5" x2="237.5" y2="567.8" stroke="#12245a" stroke-width="1.8" stroke-linecap="square"/>
<line x1="237.5" y1="560.5" x2="336.7" y2="560.5" stroke="#12245a" stroke-width="1.8" stroke-linecap="square"/>
<line x1="237.5" y1="567.8" x2="336.7" y2="567.8" stroke="#244a70" stroke-width="1.8" stroke-linecap="square"/>
<line x1="208" y1="575.5" x2="255.8" y2="575.5" stroke="#8ea8c8" stroke-width="1.8" stroke-linecap="square"/>
<line x1="214.2" y1="586.7" x2="285.3" y2="586.7" stroke="#12245a" stroke-width="1.8" stroke-linecap="square"/>
<line x1="285.3" y1="583" x2="285.3" y2="590.3" stroke="#12245a" stroke-width="1.8" stroke-linecap="square"/>
<line x1="285.3" y1="583" x2="336.7" y2="583" stroke="#244a70" stroke-width="1.8" stroke-linecap="square"/>
<line x1="285.3" y1="590.3" x2="336.7" y2="590.3" stroke="#12245a" stroke-width="1.8" stroke-linecap="square"/>
<line x1="231.2" y1="601.7" x2="278.3" y2="601.7" stroke="#6a2a18" stroke-width="1.8" stroke-linecap="square"/>
<line x1="278.3" y1="597.8" x2="278.3" y2="605" stroke="#74452e" stroke-width="1.8" stroke-linecap="square"/>
<line x1="278.3" y1="597.8" x2="328" y2="597.8" stroke="#74452e" stroke-width="1.8" stroke-linecap="square"/>
<line x1="278.3" y1="605" x2="334.2" y2="605" stroke="#6a2a18" stroke-width="1.8" stroke-linecap="square"/>
<line x1="231.2" y1="616.7" x2="250.5" y2="616.7" stroke="#12245a" stroke-width="1.8" stroke-linecap="square"/>
<line x1="250.5" y1="612.8" x2="250.5" y2="620" stroke="#12245a" stroke-width="1.8" stroke-linecap="square"/>
<line x1="250.5" y1="612.8" x2="325.3" y2="612.8" stroke="#244a70" stroke-width="1.8" stroke-linecap="square"/>
<line x1="250.5" y1="620" x2="325.3" y2="620" stroke="#12245a" stroke-width="1.8" stroke-linecap="square"/>
<line x1="276.7" y1="627.5" x2="330.5" y2="627.5" stroke="#4a7e98" stroke-width="1.8" stroke-linecap="square"/>
<line x1="276.7" y1="635.3" x2="325.3" y2="635.3" stroke="#caa890" stroke-width="1.8" stroke-linecap="square"/>
<line x1="256.2" y1="642.8" x2="336.7" y2="642.8" stroke="#244a70" stroke-width="1.8" stroke-linecap="square"/>
<line x1="283.3" y1="650" x2="329.2" y2="650" stroke="#4a7e98" stroke-width="1.8" stroke-linecap="square"/>
<line x1="283.3" y1="657.5" x2="300.8" y2="657.5" stroke="#c8b070" stroke-width="1.8" stroke-linecap="square"/>
<line x1="194.2" y1="668.8" x2="280.3" y2="668.8" stroke="#244a70" stroke-width="1.8" stroke-linecap="square"/>
<line x1="280.3" y1="665" x2="280.3" y2="672.5" stroke="#12245a" stroke-width="1.8" stroke-linecap="square"/>
<line x1="280.3" y1="665" x2="325.3" y2="665" stroke="#244a70" stroke-width="1.8" stroke-linecap="square"/>
<line x1="280.3" y1="672.5" x2="336.7" y2="672.5" stroke="#12245a" stroke-width="1.8" stroke-linecap="square"/>
<line x1="235" y1="680" x2="334.2" y2="680" stroke="#6a2a18" stroke-width="1.8" stroke-linecap="square"/>
<line x1="244.5" y1="687.5" x2="318.8" y2="687.5" stroke="#cb7b1e" stroke-width="1.8" stroke-linecap="square"/>
<line x1="244.5" y1="695" x2="328" y2="695" stroke="#74452e" stroke-width="1.8" stroke-linecap="square"/>
<line x1="205" y1="702.5" x2="255.8" y2="702.5" stroke="#8ea8c8" stroke-width="1.8" stroke-linecap="square"/>
<line x1="220" y1="713.7" x2="247" y2="713.7" stroke="#12245a" stroke-width="1.8" stroke-linecap="square"/>
<line x1="247" y1="710" x2="247" y2="717.5" stroke="#12245a" stroke-width="1.8" stroke-linecap="square"/>
<line x1="247" y1="710" x2="325.3" y2="710" stroke="#244a70" stroke-width="1.8" stroke-linecap="square"/>
<line x1="247" y1="717.5" x2="325.3" y2="717.5" stroke="#12245a" stroke-width="1.8" stroke-linecap="square"/>
<line x1="278.3" y1="725" x2="318.8" y2="725" stroke="#74452e" stroke-width="1.8" stroke-linecap="square"/>
<line x1="278.3" y1="732.5" x2="336.7" y2="732.5" stroke="#12245a" stroke-width="1.8" stroke-linecap="square"/>
<line x1="227.5" y1="742.3" x2="297" y2="742.3" stroke="#12245a" stroke-width="1.8" stroke-linecap="square"/>
<line x1="248.6" y1="754.6" x2="325.3" y2="754.6" stroke="#244a70" stroke-width="1.8" stroke-linecap="square"/>
<line x1="231.5" y1="757" x2="297" y2="757" stroke="#cb7b1e" stroke-width="1.8" stroke-linecap="square"/>
<line x1="231.5" y1="762.3" x2="258.3" y2="762.3" stroke="#8ea8c8" stroke-width="1.8" stroke-linecap="square"/>
<line x1="297" y1="736.5" x2="297" y2="777" stroke="#cb7b1e" stroke-width="1.8" stroke-linecap="square"/>
<line x1="297" y1="739.7" x2="325.3" y2="739.7" stroke="#244a70" stroke-width="1.8" stroke-linecap="square"/>
<line x1="297" y1="747.3" x2="336.9" y2="747.3" stroke="#12245a" stroke-width="1.8" stroke-linecap="square"/>
<line x1="297" y1="769.6" x2="334.3" y2="769.6" stroke="#cb7b1e" stroke-width="1.8" stroke-linecap="square"/>
<line x1="297" y1="777" x2="334.3" y2="777" stroke="#cb7b1e" stroke-width="1.8" stroke-linecap="square"/>
<circle cx="188.3" cy="291.3" r="1.1" fill="#bcbcbc"/>
<circle cx="321.3" cy="216.7" r="2.4" fill="#74452e"/>
<circle cx="325.3" cy="224.5" r="2.4" fill="#12245a"/>
<circle cx="258.3" cy="231.7" r="1.1" fill="#8ea8c8"/>
<circle cx="325.3" cy="246.7" r="2.4" fill="#6c8a2c"/>
<circle cx="336.7" cy="261.7" r="2.4" fill="#141414"/>
<circle cx="336.7" cy="268.8" r="2.4" fill="#244a70"/>
<circle cx="300" cy="276.7" r="1.1" fill="#8ea8c8"/>
<circle cx="325.3" cy="283.8" r="2.4" fill="#2a3e46"/>
<circle cx="329.2" cy="299.2" r="2.4" fill="#4a7e98"/>
<circle cx="325.3" cy="306.3" r="2.4" fill="#12245a"/>
<circle cx="336.7" cy="313.8" r="2.4" fill="#2a3e46"/>
<circle cx="336.7" cy="321.3" r="2.4" fill="#12245a"/>
<circle cx="334.2" cy="328.8" r="2.4" fill="#cb7b1e"/>
<circle cx="325.3" cy="336.3" r="2.4" fill="#12245a"/>
<circle cx="325.3" cy="343.7" r="2.4" fill="#12245a"/>
<circle cx="325.3" cy="351.3" r="2.4" fill="#12245a"/>
<circle cx="325.3" cy="358.7" r="2.4" fill="#244a70"/>
<circle cx="325.3" cy="366.3" r="2.4" fill="#74452e"/>
<circle cx="324.2" cy="373.8" r="2.4" fill="#74452e"/>
<circle cx="324.2" cy="381.2" r="2.4" fill="#141414"/>
<circle cx="328" cy="388.7" r="2.4" fill="#141414"/>
<circle cx="325.3" cy="396.2" r="2.4" fill="#74452e"/>
<circle cx="330.5" cy="403.7" r="2.4" fill="#3f8fa8"/>
<circle cx="328" cy="411.2" r="2.4" fill="#4a7e98"/>
<circle cx="325.3" cy="418.7" r="2.4" fill="#12245a"/>
<circle cx="329.2" cy="426.2" r="2.4" fill="#74452e"/>
<circle cx="329.2" cy="433.7" r="2.4" fill="#6a2a18"/>
<circle cx="325.3" cy="440.8" r="2.4" fill="#74452e"/>
<circle cx="265.8" cy="448.3" r="1.1" fill="#b8a860"/>
<circle cx="328" cy="455.8" r="2.4" fill="#333333"/>
<circle cx="325.3" cy="463.3" r="2.4" fill="#12245a"/>
<circle cx="265.8" cy="470.8" r="1.1" fill="#8ea8c8"/>
<circle cx="322.5" cy="485.8" r="2.4" fill="#141414"/>
<circle cx="328" cy="493.3" r="2.4" fill="#141414"/>
<circle cx="325.3" cy="500.8" r="2.4" fill="#244a70"/>
<circle cx="325.3" cy="508.3" r="2.4" fill="#6c8a2c"/>
<circle cx="325.3" cy="515.5" r="2.4" fill="#244a70"/>
<circle cx="326.7" cy="523.3" r="2.4" fill="#141414"/>
<circle cx="325.3" cy="530.5" r="2.4" fill="#12245a"/>
<circle cx="336.7" cy="538" r="2.4" fill="#244a70"/>
<circle cx="326.7" cy="545.5" r="2.4" fill="#141414"/>
<circle cx="331.7" cy="552.8" r="2.4" fill="#74452e"/>
<circle cx="336.7" cy="560.5" r="2.4" fill="#12245a"/>
<circle cx="336.7" cy="567.8" r="2.4" fill="#244a70"/>
<circle cx="255.8" cy="575.5" r="1.1" fill="#8ea8c8"/>
<circle cx="336.7" cy="583" r="2.4" fill="#244a70"/>
<circle cx="336.7" cy="590.3" r="2.4" fill="#12245a"/>
<circle cx="328" cy="597.8" r="2.4" fill="#74452e"/>
<circle cx="334.2" cy="605" r="2.4" fill="#6a2a18"/>
<circle cx="325.3" cy="612.8" r="2.4" fill="#244a70"/>
<circle cx="325.3" cy="620" r="2.4" fill="#12245a"/>
<circle cx="330.5" cy="627.5" r="2.4" fill="#4a7e98"/>
<circle cx="325.3" cy="635.3" r="2.4" fill="#caa890"/>
<circle cx="336.7" cy="642.8" r="2.4" fill="#244a70"/>
<circle cx="329.2" cy="650" r="2.4" fill="#4a7e98"/>
<circle cx="300.8" cy="657.5" r="1.1" fill="#c8b070"/>
<circle cx="325.3" cy="665" r="2.4" fill="#244a70"/>
<circle cx="336.7" cy="672.5" r="2.4" fill="#12245a"/>
<circle cx="334.2" cy="680" r="2.4" fill="#6a2a18"/>
<circle cx="318.8" cy="687.5" r="2.4" fill="#cb7b1e"/>
<circle cx="328" cy="695" r="2.4" fill="#74452e"/>
<circle cx="255.8" cy="702.5" r="1.1" fill="#8ea8c8"/>
<circle cx="325.3" cy="710" r="2.4" fill="#244a70"/>
<circle cx="325.3" cy="717.5" r="2.4" fill="#12245a"/>
<circle cx="318.8" cy="725" r="2.4" fill="#74452e"/>
<circle cx="336.7" cy="732.5" r="2.4" fill="#12245a"/>
<circle cx="325.3" cy="754.6" r="2.4" fill="#244a70"/>
<circle cx="258.3" cy="762.3" r="1.1" fill="#8ea8c8"/>
<circle cx="325.3" cy="739.7" r="2.4" fill="#244a70"/>
<circle cx="336.9" cy="747.3" r="2.4" fill="#12245a"/>
<circle cx="334.3" cy="769.6" r="2.4" fill="#cb7b1e"/>
<circle cx="334.3" cy="777" r="2.4" fill="#cb7b1e"/>
<text x="347.2" y="237.5" font-size="11.5" fill="#2e4a6e" font-weight="700">Western</text>
<text x="347.2" y="248.7" font-size="11.5" fill="#2e4a6e" font-weight="700">Urban</text>
<path d="M339.2 236.5 A3.2 3.2 0 0 1 339.5 242.5" fill="none" stroke="#3c5a78" stroke-width="1" stroke-dasharray="1.6 0.8"/>
<path d="M330 232.8 L330.3 244.6 L333 242 L335.8 248.4 L337.9 247.5 L335.3 241.6 L339.2 241.6 Z" fill="#0a0a0a" stroke="#ffffff" stroke-width="0.7" stroke-linejoin="round"/>
<text x="145.4" y="829.9" font-size="9.8" fill="#888888" font-weight="700">December</text>
<text x="145.4" y="842.6" font-size="9.8" fill="#888888" font-weight="700">2024</text>
<text x="211.6" y="829.9" font-size="9.8" fill="#888888" font-weight="700">February</text>
<text x="211.6" y="842.6" font-size="9.8" fill="#888888" font-weight="700">2025</text>
<text x="274.5" y="829.9" font-size="9.8" fill="#888888" font-weight="700">April</text>
<text x="339.9" y="829.9" font-size="9.8" fill="#888888" font-weight="700">June</text>
<text x="420" y="181.5" font-size="10.5" fill="#444444" font-weight="400">DAILY CASES WITH 7-DAY ROLLING AVERAGE</text>
<line x1="450.2" y1="198.6" x2="845" y2="198.6" stroke="#dddddd" stroke-width="1"/>
<text x="444" y="202.6" font-size="11" fill="#666666" font-weight="400" text-anchor="end">400</text>
<line x1="450.2" y1="255.2" x2="845" y2="255.2" stroke="#dddddd" stroke-width="1"/>
<text x="444" y="259.2" font-size="11" fill="#666666" font-weight="400" text-anchor="end">200</text>
<text x="444" y="316.5" font-size="11" fill="#666666" font-weight="400" text-anchor="end">0</text>
<rect x="450.60" y="304.49" width="5.6" height="8.01" fill="#c0600f"/>
<rect x="472.15" y="294.06" width="5.6" height="18.44" fill="#c0600f"/>
<rect x="486.52" y="295.99" width="5.6" height="16.51" fill="#c0600f"/>
<rect x="493.71" y="301.28" width="5.6" height="11.22" fill="#c0600f"/>
<rect x="500.89" y="304.01" width="5.6" height="8.49" fill="#c0600f"/>
<rect x="508.08" y="297.59" width="5.6" height="14.91" fill="#c0600f"/>
<rect x="515.26" y="308.50" width="5.6" height="4.00" fill="#c0600f"/>
<rect x="522.45" y="311.38" width="5.6" height="1.12" fill="#c0600f"/>
<rect x="529.63" y="303.68" width="5.6" height="8.82" fill="#c0600f"/>
<rect x="544.00" y="296.95" width="5.6" height="15.55" fill="#c0600f"/>
<rect x="551.19" y="295.99" width="5.6" height="16.51" fill="#c0600f"/>
<rect x="558.38" y="286.36" width="5.6" height="26.14" fill="#c0600f"/>
<rect x="565.56" y="288.93" width="5.6" height="23.57" fill="#c0600f"/>
<rect x="572.75" y="288.45" width="5.6" height="24.05" fill="#c0600f"/>
<rect x="579.93" y="301.60" width="5.6" height="10.90" fill="#c0600f"/>
<rect x="587.12" y="311.70" width="5.6" height="0.80" fill="#c0600f"/>
<rect x="594.30" y="256.37" width="5.6" height="56.13" fill="#c0600f"/>
<rect x="601.49" y="286.04" width="5.6" height="26.46" fill="#c0600f"/>
<rect x="608.67" y="287.65" width="5.6" height="24.85" fill="#c0600f"/>
<rect x="615.86" y="303.20" width="5.6" height="9.30" fill="#c0600f"/>
<rect x="623.04" y="278.83" width="5.6" height="33.67" fill="#c0600f"/>
<rect x="630.23" y="308.66" width="5.6" height="3.84" fill="#c0600f"/>
<rect x="637.41" y="285.88" width="5.6" height="26.62" fill="#c0600f"/>
<rect x="644.60" y="291.34" width="5.6" height="21.16" fill="#c0600f"/>
<rect x="651.78" y="294.86" width="5.6" height="17.64" fill="#c0600f"/>
<rect x="666.15" y="252.04" width="5.6" height="60.46" fill="#c0600f"/>
<rect x="673.34" y="265.99" width="5.6" height="46.51" fill="#c0600f"/>
<rect x="680.52" y="294.38" width="5.6" height="18.12" fill="#c0600f"/>
<rect x="687.71" y="283.64" width="5.6" height="28.86" fill="#c0600f"/>
<rect x="694.89" y="296.15" width="5.6" height="16.35" fill="#c0600f"/>
<rect x="702.08" y="270.00" width="5.6" height="42.50" fill="#c0600f"/>
<rect x="709.26" y="291.17" width="5.6" height="21.33" fill="#c0600f"/>
<rect x="723.63" y="253.97" width="5.6" height="58.53" fill="#c0600f"/>
<rect x="730.82" y="308.82" width="5.6" height="3.68" fill="#c0600f"/>
<rect x="738.00" y="288.93" width="5.6" height="23.57" fill="#c0600f"/>
<rect x="745.18" y="274.82" width="5.6" height="37.68" fill="#c0600f"/>
<rect x="752.37" y="296.79" width="5.6" height="15.71" fill="#c0600f"/>
<rect x="759.56" y="287.17" width="5.6" height="25.33" fill="#c0600f"/>
<rect x="766.74" y="298.87" width="5.6" height="13.63" fill="#c0600f"/>
<rect x="781.11" y="289.57" width="5.6" height="22.93" fill="#c0600f"/>
<rect x="788.30" y="299.84" width="5.6" height="12.66" fill="#c0600f"/>
<rect x="795.48" y="292.46" width="5.6" height="20.04" fill="#c0600f"/>
<rect x="802.66" y="285.24" width="5.6" height="27.26" fill="#c0600f"/>
<rect x="817.04" y="279.95" width="5.6" height="32.55" fill="#c0600f"/>
<rect x="824.22" y="296.15" width="5.6" height="16.35" fill="#c0600f"/>
<rect x="838.59" y="289.25" width="5.6" height="23.25" fill="#c0600f"/>
<rect x="579.93" y="307.5" width="5.6" height="5" fill="#6e1d0a"/>
<rect x="644.60" y="307.5" width="5.6" height="5" fill="#6e1d0a"/>
<rect x="709.26" y="307.5" width="5.6" height="5" fill="#6e1d0a"/>
<line x1="450.2" y1="312.5" x2="845" y2="312.5" stroke="#777" stroke-width="1"/>
<polyline points="450.2,304.5 460.1,304.5 467.3,302.1 474.5,301.6 482.6,304.5 489.0,303.2 496.2,305.3 504.2,304.5 512.2,303.2 518.6,301.6 526.7,298.4 533.1,295.7 545.9,295.3 554.7,289.6 561.1,288.0 569.2,288.4 576.4,290.1 582.8,289.3 590.0,290.4 597.2,286.8 604.5,291.7 610.9,292.8 618.4,296.1 626.1,288.9 632.5,287.2 640.5,284.9 639.6,284.8 647.6,284.4 654.9,285.6 662.1,282.0 669.0,278.8 676.5,287.2 683.7,285.6 690.9,287.6 698.2,288.4 705.1,285.7 712.1,289.3 719.3,288.4 726.6,286.8 733.9,295.2 741.0,292.8 748.2,294.1 755.4,296.8 762.6,295.3 769.5,298.9 776.8,296.1 784.0,294.1 791.2,296.0 798.4,294.5 805.6,297.8 812.8,301.3 820.1,301.6 827.3,305.3 834.5,308.2 841.7,308.8 845.7,309.3" fill="none" stroke="#1f3a40" stroke-width="2" stroke-linejoin="round"/>
<line x1="600.4" y1="312.5" x2="600.4" y2="316" stroke="#777" stroke-width="1"/>
<line x1="823.3" y1="312.5" x2="823.3" y2="316" stroke="#777" stroke-width="1"/>
<text x="600.1" y="326.6" font-size="10.5" fill="#808080" font-weight="400" stroke="#808080" stroke-width="0.35">May</text>
<text x="822" y="326.6" font-size="10.5" fill="#808080" font-weight="400" stroke="#808080" stroke-width="0.35">Jun</text>
<text x="873.7" y="289" font-size="13.8" fill="#8b3510" font-weight="700">Reported Cases</text>
<text x="1045" y="289.3" font-size="14" fill="#7a3618" font-weight="400" text-anchor="end" letter-spacing="0.6">3,474</text>
<text x="873.7" y="307.6" font-size="13.8" fill="#55170a" font-weight="700">Sequenced</text>
<text x="1045" y="307.6" font-size="14" fill="#55170a" font-weight="400" text-anchor="end" letter-spacing="0.6">68</text>
<text x="421.3" y="372" font-size="10" fill="#555555" font-weight="400" letter-spacing="0.2">GENDER</text>
<text x="538.7" y="372" font-size="10" fill="#555555" font-weight="400" letter-spacing="0.2">AGE</text>
<path d="M475.70 388.50 A31.8 31.8 0 0 1 477.36 452.06 L476.57 436.88 A16.6 16.6 0 0 0 475.70 403.70 Z" fill="#0f4a66"/>
<path d="M477.36 452.06 A31.8 31.8 0 0 1 465.35 390.23 L470.30 404.60 A16.6 16.6 0 0 0 476.57 436.88 Z" fill="#179ab6"/>
<path d="M465.35 390.23 A31.8 31.8 0 0 1 475.70 388.50 L475.70 403.70 A16.6 16.6 0 0 0 470.30 404.60 Z" fill="#b9d0e6"/>
<text x="446.5" y="470.5" font-size="13.8" fill="#14304a" font-weight="700">Male</text>
<text x="485.2" y="470.5" font-size="13.3" fill="#14304a" font-weight="400">1699</text>
<line x1="546.4" y1="461.7" x2="712" y2="461.7" stroke="#7b7f98" stroke-width="1.5"/>
<line x1="550.4" y1="461.7" x2="550.4" y2="466.7" stroke="#7b7f98" stroke-width="1.2"/>
<text x="550.4" y="477" font-size="11" fill="#6a6e80" font-weight="400" text-anchor="middle">6</text>
<line x1="574.3" y1="461.7" x2="574.3" y2="466.7" stroke="#7b7f98" stroke-width="1.2"/>
<text x="574.3" y="477" font-size="11" fill="#6a6e80" font-weight="400" text-anchor="middle">12</text>
<line x1="597.6" y1="461.7" x2="597.6" y2="466.7" stroke="#7b7f98" stroke-width="1.2"/>
<text x="597.6" y="477" font-size="11" fill="#6a6e80" font-weight="400" text-anchor="middle">18</text>
<line x1="621.3" y1="461.7" x2="621.3" y2="466.7" stroke="#7b7f98" stroke-width="1.2"/>
<text x="621.3" y="477" font-size="11" fill="#6a6e80" font-weight="400" text-anchor="middle">24</text>
<line x1="645.1" y1="461.7" x2="645.1" y2="466.7" stroke="#7b7f98" stroke-width="1.2"/>
<text x="645.1" y="477" font-size="11" fill="#6a6e80" font-weight="400" text-anchor="middle">30</text>
<line x1="668.7" y1="461.7" x2="668.7" y2="466.7" stroke="#7b7f98" stroke-width="1.2"/>
<text x="668.7" y="477" font-size="11" fill="#6a6e80" font-weight="400" text-anchor="middle">36</text>
<line x1="692.4" y1="461.7" x2="692.4" y2="466.7" stroke="#7b7f98" stroke-width="1.2"/>
<text x="692.4" y="477" font-size="11" fill="#6a6e80" font-weight="400" text-anchor="middle">42</text>
<rect x="551.8" y="448.7" width="5" height="12.3" fill="#8a89a8"/>
<rect x="559.5" y="448.7" width="5" height="12.3" fill="#8a89a8"/>
<rect x="575.1" y="448.7" width="5" height="12.3" fill="#8a89a8"/>
<rect x="606.6" y="434.9" width="5" height="26.1" fill="#8a89a8"/>
<rect x="614.4" y="448.7" width="5" height="12.3" fill="#8a89a8"/>
<rect x="622.4" y="407.3" width="5" height="53.7" fill="#8a89a8"/>
<rect x="630.2" y="394.0" width="5" height="67.0" fill="#8a89a8"/>
<rect x="637.9" y="407.3" width="5" height="53.7" fill="#8a89a8"/>
<rect x="645.9" y="434.9" width="5" height="26.1" fill="#8a89a8"/>
<rect x="653.9" y="421.3" width="5" height="39.7" fill="#8a89a8"/>
<rect x="661.8" y="421.3" width="5" height="39.7" fill="#8a89a8"/>
<rect x="669.5" y="448.7" width="5" height="12.3" fill="#8a89a8"/>
<rect x="685.2" y="434.9" width="5" height="26.1" fill="#8a89a8"/>
<rect x="693.1" y="448.7" width="5" height="12.3" fill="#8a89a8"/>
<text x="753.9" y="372.7" font-size="10" fill="#555555" font-weight="400" letter-spacing="0.2">CT VALUE</text>
<rect x="775.8" y="436.5" width="16.8" height="25.1" fill="#7b7e6b"/>
<rect x="797.6" y="393.6" width="16.8" height="68.0" fill="#7b7e6b"/>
<rect x="819.2" y="393.6" width="16.7" height="68.0" fill="#7b7e6b"/>
<rect x="840.7" y="427.7" width="16.8" height="33.9" fill="#7b7e6b"/>
<rect x="862.3" y="427.7" width="16.7" height="33.9" fill="#7b7e6b"/>
<rect x="927" y="453.2" width="16.7" height="8.4" fill="#7b7e6b"/>
<rect x="970.3" y="444.5" width="16.8" height="17.1" fill="#7b7e6b"/>
<rect x="991.9" y="453.2" width="17.1" height="8.4" fill="#7b7e6b"/>
<rect x="1013.4" y="453.2" width="17.2" height="8.4" fill="#7b7e6b"/>
<line x1="762.2" y1="461.6" x2="1044.8" y2="461.6" stroke="#777777" stroke-width="1.5"/>
<line x1="773.5" y1="461.6" x2="773.5" y2="466" stroke="#777" stroke-width="1.2"/>
<text x="773.5" y="477.3" font-size="11" fill="#555555" font-weight="400" text-anchor="middle">16</text>
<line x1="795.1" y1="461.6" x2="795.1" y2="466" stroke="#777" stroke-width="1.2"/>
<text x="795.1" y="477.3" font-size="11" fill="#555555" font-weight="400" text-anchor="middle">18</text>
<line x1="817.1" y1="461.6" x2="817.1" y2="466" stroke="#777" stroke-width="1.2"/>
<text x="817.1" y="477.3" font-size="11" fill="#555555" font-weight="400" text-anchor="middle">20</text>
<line x1="838.6" y1="461.6" x2="838.6" y2="466" stroke="#777" stroke-width="1.2"/>
<text x="838.6" y="477.3" font-size="11" fill="#555555" font-weight="400" text-anchor="middle">22</text>
<line x1="860.4" y1="461.6" x2="860.4" y2="466" stroke="#777" stroke-width="1.2"/>
<text x="860.4" y="477.3" font-size="11" fill="#555555" font-weight="400" text-anchor="middle">24</text>
<line x1="882" y1="461.6" x2="882" y2="466" stroke="#777" stroke-width="1.2"/>
<text x="882" y="477.3" font-size="11" fill="#555555" font-weight="400" text-anchor="middle">26</text>
<line x1="903.5" y1="461.6" x2="903.5" y2="466" stroke="#777" stroke-width="1.2"/>
<text x="903.5" y="477.3" font-size="11" fill="#555555" font-weight="400" text-anchor="middle">28</text>
<line x1="925.3" y1="461.6" x2="925.3" y2="466" stroke="#777" stroke-width="1.2"/>
<text x="925.3" y="477.3" font-size="11" fill="#555555" font-weight="400" text-anchor="middle">30</text>
<line x1="946.9" y1="461.6" x2="946.9" y2="466" stroke="#777" stroke-width="1.2"/>
<text x="946.9" y="477.3" font-size="11" fill="#555555" font-weight="400" text-anchor="middle">32</text>
<line x1="968.4" y1="461.6" x2="968.4" y2="466" stroke="#777" stroke-width="1.2"/>
<text x="968.4" y="477.3" font-size="11" fill="#555555" font-weight="400" text-anchor="middle">34</text>
<line x1="990.2" y1="461.6" x2="990.2" y2="466" stroke="#777" stroke-width="1.2"/>
<text x="990.2" y="477.3" font-size="11" fill="#555555" font-weight="400" text-anchor="middle">36</text>
<line x1="1011.8" y1="461.6" x2="1011.8" y2="466" stroke="#777" stroke-width="1.2"/>
<text x="1011.8" y="477.3" font-size="11" fill="#555555" font-weight="400" text-anchor="middle">38</text>
<line x1="1033.3" y1="461.6" x2="1033.3" y2="466" stroke="#777" stroke-width="1.2"/>
<text x="1033.3" y="477.3" font-size="11" fill="#555555" font-weight="400" text-anchor="middle">40</text>
<text x="420" y="514" font-size="10.2" fill="#333333" font-weight="400">SEQUENCED RECORDS</text>
<rect x="872.3" y="501" width="189.7" height="20" fill="#fcfcfc"/>
<path d="M872.8 501 L872.8 520.5 L1062 520.5" fill="none" stroke="#e2e2e2" stroke-width="1"/>
<text x="878" y="514.5" font-size="10" fill="#666666" font-weight="400">Search...</text>
<text x="437.6" y="539.5" font-size="10.3" fill="#666666" font-weight="400">Identifier</text>
<text x="514" y="539.5" font-size="10.3" fill="#333333" font-weight="400">Collection Date↑</text>
<text x="619.6" y="539.5" font-size="10.3" fill="#666666" font-weight="400">District</text>
<text x="735.3" y="539.5" font-size="10.3" fill="#666666" font-weight="400" text-anchor="middle">Gender</text>
<text x="790.5" y="539.5" font-size="10.3" fill="#666666" font-weight="400" text-anchor="middle">Age</text>
<text x="850.9" y="539.5" font-size="10.3" fill="#666666" font-weight="400" text-anchor="middle">Clade</text>
<text x="938.4" y="539.5" font-size="10.3" fill="#666666" font-weight="400" text-anchor="middle">Lineage</text>
<text x="1020" y="539.5" font-size="10.3" fill="#666666" font-weight="400" text-anchor="middle">CT Value</text>
<rect x="418" y="628.8" width="86.6" height="23.4" fill="#e4e4e4"/>
<rect x="508" y="628.8" width="101.3" height="23.4" fill="#e4e4e4"/>
<rect x="612.8" y="628.8" width="92.9" height="23.4" fill="#e4e4e4"/>
<rect x="710" y="628.8" width="51.0" height="23.4" fill="#e4e4e4"/>
<rect x="765" y="628.8" width="40.0" height="23.4" fill="#e4e4e4"/>
<rect x="809.5" y="628.8" width="83.2" height="23.4" fill="#e4e4e4"/>
<rect x="897" y="628.8" width="84.0" height="23.4" fill="#e4e4e4"/>
<rect x="985" y="628.8" width="74.4" height="23.4" fill="#e4e4e4"/>
<text x="437.6" y="566.0" font-size="10.2" fill="#555555" font-weight="400" stroke="#555555" stroke-width="0.15">S-819</text>
<text x="514" y="566.0" font-size="10.3" fill="#505050" font-weight="400" stroke="#505050" stroke-width="0.2">07 May 2025</text>
<text x="619.6" y="566.0" font-size="10.3" fill="#21406f" font-weight="400" stroke="#21406f" stroke-width="0.22">Western Urban</text>
<text x="735.3" y="566.0" font-size="10" fill="#666666" font-weight="400" text-anchor="middle">N/A</text>
<text x="850.9" y="566.0" font-size="10.3" fill="#a8692e" font-weight="400" text-anchor="middle" stroke="#a8692e" stroke-width="0.35">IIb</text>
<text x="938.4" y="566.0" font-size="10" fill="#5a78b2" font-weight="400" text-anchor="middle">A.2.2.1</text>
<text x="437.6" y="592.1" font-size="10.2" fill="#555555" font-weight="400" stroke="#555555" stroke-width="0.15">S-820</text>
<text x="514" y="592.1" font-size="10.3" fill="#505050" font-weight="400" stroke="#505050" stroke-width="0.2">07 May 2025</text>
<text x="619.6" y="592.1" font-size="10.3" fill="#21406f" font-weight="400" stroke="#21406f" stroke-width="0.22">Western Urban</text>
<text x="735.3" y="592.1" font-size="10" fill="#666666" font-weight="400" text-anchor="middle">N/A</text>
<text x="850.9" y="592.1" font-size="10.3" fill="#a8692e" font-weight="400" text-anchor="middle" stroke="#a8692e" stroke-width="0.35">IIb</text>
<text x="938.4" y="592.1" font-size="10" fill="#5a78b2" font-weight="400" text-anchor="middle">A.2.2.1</text>
<text x="437.6" y="618.2" font-size="10.2" fill="#555555" font-weight="400" stroke="#555555" stroke-width="0.15">S-823</text>
<text x="514" y="618.2" font-size="10.3" fill="#505050" font-weight="400" stroke="#505050" stroke-width="0.2">07 May 2025</text>
<text x="619.6" y="618.2" font-size="10.3" fill="#21406f" font-weight="400" stroke="#21406f" stroke-width="0.22">Western Urban</text>
<text x="735.3" y="618.2" font-size="10" fill="#666666" font-weight="400" text-anchor="middle">N/A</text>
<text x="850.9" y="618.2" font-size="10.3" fill="#a8692e" font-weight="400" text-anchor="middle" stroke="#a8692e" stroke-width="0.35">IIb</text>
<text x="938.4" y="618.2" font-size="10" fill="#5a78b2" font-weight="400" text-anchor="middle">A.2.2.1</text>
<text x="437.6" y="644.3" font-size="10.2" fill="#555555" font-weight="400" stroke="#555555" stroke-width="0.15">S-833</text>
<text x="514" y="644.3" font-size="10.3" fill="#505050" font-weight="400" stroke="#505050" stroke-width="0.2">07 May 2025</text>
<text x="619.6" y="644.3" font-size="10.3" fill="#21406f" font-weight="400" stroke="#21406f" stroke-width="0.22">Western Urban</text>
<text x="735.3" y="644.3" font-size="10" fill="#666666" font-weight="400" text-anchor="middle">N/A</text>
<text x="850.9" y="644.3" font-size="10.3" fill="#a8692e" font-weight="400" text-anchor="middle" stroke="#a8692e" stroke-width="0.35">IIb</text>
<text x="938.4" y="644.3" font-size="10" fill="#5a78b2" font-weight="400" text-anchor="middle">A.2.2.1</text>
<text x="437.6" y="670.4" font-size="10.2" fill="#555555" font-weight="400" stroke="#555555" stroke-width="0.15">S-837</text>
<text x="514" y="670.4" font-size="10.3" fill="#505050" font-weight="400" stroke="#505050" stroke-width="0.2">07 May 2025</text>
<text x="619.6" y="670.4" font-size="10.3" fill="#21406f" font-weight="400" stroke="#21406f" stroke-width="0.22">Western Urban</text>
<text x="735.3" y="670.4" font-size="10" fill="#666666" font-weight="400" text-anchor="middle">N/A</text>
<text x="850.9" y="670.4" font-size="10.3" fill="#a8692e" font-weight="400" text-anchor="middle" stroke="#a8692e" stroke-width="0.35">IIb</text>
<text x="938.4" y="670.4" font-size="10" fill="#5a78b2" font-weight="400" text-anchor="middle">A.2.2.1</text>
<text x="437.6" y="696.5" font-size="10.2" fill="#555555" font-weight="400" stroke="#555555" stroke-width="0.15">S-841</text>
<text x="514" y="696.5" font-size="10.3" fill="#505050" font-weight="400" stroke="#505050" stroke-width="0.2">07 May 2025</text>
<text x="619.6" y="696.5" font-size="10.3" fill="#21406f" font-weight="400" stroke="#21406f" stroke-width="0.22">Western Urban</text>
<text x="735.3" y="696.5" font-size="10" fill="#666666" font-weight="400" text-anchor="middle">N/A</text>
<text x="850.9" y="696.5" font-size="10.3" fill="#a8692e" font-weight="400" text-anchor="middle" stroke="#a8692e" stroke-width="0.35">IIb</text>
<text x="938.4" y="696.5" font-size="10" fill="#5a78b2" font-weight="400" text-anchor="middle">A.2.2.1</text>
<text x="437.6" y="722.6" font-size="10.2" fill="#555555" font-weight="400" stroke="#555555" stroke-width="0.15">S-844</text>
<text x="514" y="722.6" font-size="10.3" fill="#505050" font-weight="400" stroke="#505050" stroke-width="0.2">07 May 2025</text>
<text x="619.6" y="722.6" font-size="10.3" fill="#21406f" font-weight="400" stroke="#21406f" stroke-width="0.22">Western Urban</text>
<text x="735.3" y="722.6" font-size="10" fill="#666666" font-weight="400" text-anchor="middle">N/A</text>
<text x="850.9" y="722.6" font-size="10.3" fill="#a8692e" font-weight="400" text-anchor="middle" stroke="#a8692e" stroke-width="0.35">IIb</text>
<text x="938.4" y="722.6" font-size="10" fill="#5a78b2" font-weight="400" text-anchor="middle">A.2.2.1</text>
<text x="437.6" y="748.7" font-size="10.2" fill="#555555" font-weight="400" stroke="#555555" stroke-width="0.15">S-845</text>
<text x="514" y="748.7" font-size="10.3" fill="#505050" font-weight="400" stroke="#505050" stroke-width="0.2">07 May 2025</text>
<text x="619.6" y="748.7" font-size="10.3" fill="#21406f" font-weight="400" stroke="#21406f" stroke-width="0.22">Western Urban</text>
<text x="735.3" y="748.7" font-size="10" fill="#666666" font-weight="400" text-anchor="middle">N/A</text>
<text x="850.9" y="748.7" font-size="10.3" fill="#a8692e" font-weight="400" text-anchor="middle" stroke="#a8692e" stroke-width="0.35">IIb</text>
<text x="938.4" y="748.7" font-size="10" fill="#5a78b2" font-weight="400" text-anchor="middle">A.2.2.1</text>
<text x="437.6" y="774.8" font-size="10.2" fill="#555555" font-weight="400" stroke="#555555" stroke-width="0.15">S-847</text>
<text x="514" y="774.8" font-size="10.3" fill="#505050" font-weight="400" stroke="#505050" stroke-width="0.2">07 May 2025</text>
<text x="619.6" y="774.8" font-size="10.3" fill="#21406f" font-weight="400" stroke="#21406f" stroke-width="0.22">Western Urban</text>
<text x="735.3" y="774.8" font-size="10" fill="#666666" font-weight="400" text-anchor="middle">N/A</text>
<text x="850.9" y="774.8" font-size="10.3" fill="#a8692e" font-weight="400" text-anchor="middle" stroke="#a8692e" stroke-width="0.35">IIb</text>
<text x="938.4" y="774.8" font-size="10" fill="#5a78b2" font-weight="400" text-anchor="middle">A.2.2.1</text>
<text x="437.6" y="800.9" font-size="10.2" fill="#555555" font-weight="400" stroke="#555555" stroke-width="0.15">S-848</text>
<text x="514" y="800.9" font-size="10.3" fill="#505050" font-weight="400" stroke="#505050" stroke-width="0.2">07 May 2025</text>
<text x="619.6" y="800.9" font-size="10.3" fill="#21406f" font-weight="400" stroke="#21406f" stroke-width="0.22">Western Urban</text>
<text x="735.3" y="800.9" font-size="10" fill="#666666" font-weight="400" text-anchor="middle">N/A</text>
<text x="850.9" y="800.9" font-size="10.3" fill="#a8692e" font-weight="400" text-anchor="middle" stroke="#a8692e" stroke-width="0.35">IIb</text>
<text x="938.4" y="800.9" font-size="10" fill="#5a78b2" font-weight="400" text-anchor="middle">A.2.2.1</text>
<text x="437.6" y="827.0" font-size="10.2" fill="#555555" font-weight="400" stroke="#555555" stroke-width="0.15">S-850</text>
<text x="514" y="827.0" font-size="10.3" fill="#505050" font-weight="400" stroke="#505050" stroke-width="0.2">07 May 2025</text>
<text x="619.6" y="827.0" font-size="10.3" fill="#21406f" font-weight="400" stroke="#21406f" stroke-width="0.22">Western Urban</text>
<text x="735.3" y="827.0" font-size="10" fill="#666666" font-weight="400" text-anchor="middle">N/A</text>
<text x="850.9" y="827.0" font-size="10.3" fill="#a8692e" font-weight="400" text-anchor="middle" stroke="#a8692e" stroke-width="0.35">IIb</text>
<text x="938.4" y="827.0" font-size="10" fill="#5a78b2" font-weight="400" text-anchor="middle">A.2.2.1</text>
<text x="437.6" y="853.1" font-size="10.2" fill="#555555" font-weight="400" stroke="#555555" stroke-width="0.15">S-851</text>
<text x="514" y="853.1" font-size="10.3" fill="#505050" font-weight="400" stroke="#505050" stroke-width="0.2">07 May 2025</text>
<text x="619.6" y="853.1" font-size="10.3" fill="#21406f" font-weight="400" stroke="#21406f" stroke-width="0.22">Western Urban</text>
<text x="735.3" y="853.1" font-size="10" fill="#666666" font-weight="400" text-anchor="middle">N/A</text>
<text x="850.9" y="853.1" font-size="10.3" fill="#a8692e" font-weight="400" text-anchor="middle" stroke="#a8692e" stroke-width="0.35">IIb</text>
<text x="938.4" y="853.1" font-size="10" fill="#5a78b2" font-weight="400" text-anchor="middle">A.2.2.1</text>
<clipPath id="mapclip"><rect x="1081.5" y="168.5" width="312" height="313" rx="3"/></clipPath>
<g clip-path="url(#mapclip)">
<rect x="1081" y="168" width="313" height="314" fill="#a3c1c8"/>
<polygon points="1081,238.3 1090.7,241.1 1089.3,245.3 1094.9,253.6 1100.5,245.3 1104,243.2 1100.5,250.9 1104.6,248.1 1106,255 1101.9,262 1114.4,263.4 1103.3,266.2 1099.1,274.5 1101,280 1100.5,286 1104.6,289 1106,294 1105.3,307.9 1108.8,313.4 1110.9,320.4 1108.8,324.6 1101.5,325.5 1101.9,330.1 1108.8,344 1113,351 1114.4,353.8 1126.9,346.8 1129,351 1133.9,360 1136.2,362.3 1139.7,372.9 1145,376.4 1134.4,378.2 1138,383.5 1148.6,388.8 1155.6,397.6 1164.4,399.4 1175,392.3 1173.3,399.4 1168,402.9 1175,408.2 1187.4,411.7 1174.1,416.1 1173.3,425.8 1190.9,427.6 1238,450.5 1267,468.2 1277,482 1081,482" fill="#5f7f83"/>
<polygon points="1100.2,274.5 1113.9,271.9 1122.5,270.2 1129.3,266 1132.8,254 1146.4,248.8 1149.9,242 1158.4,230 1167,216.3 1173.8,200.9 1180.7,197.5 1197.8,195 1206.3,198.4 1228.6,193.2 1229.4,188.1 1238,187.2 1291.6,187.2 1295,190.7 1296.7,198.4 1301.9,201.8 1308.7,210.3 1309.6,214.6 1315.5,218 1320.7,225.7 1324.1,230 1325.8,236.9 1332.7,245.4 1337.8,247.1 1341.2,255.7 1338.6,260.8 1336.1,271.1 1346.3,272.8 1349.8,277.9 1349.8,295 1354.9,301.9 1359.2,308.7 1349.8,319 1345,325 1342.9,330.6 1337.6,339.4 1337.6,344.7 1350,341.2 1360.6,330.6 1367.6,325.3 1374.7,324.4 1376.5,330.6 1373.8,351.8 1369.4,357 1360.6,358 1351.8,362.4 1347.3,367.6 1346.5,390.6 1339.4,394.1 1328.8,406.5 1318.2,415.3 1307.6,424.1 1297,431.2 1290,440 1282.9,443.5 1279.4,454.1 1272.4,466.5 1267,468.2 1238,450.5 1190.9,427.6 1173.3,425.8 1174.1,416.1 1187.4,411.7 1175,408.2 1168,402.9 1173.3,399.4 1175,392.3 1164.4,399.4 1155.6,397.6 1148.6,388.8 1138,383.5 1134.4,378.2 1145,376.4 1139.7,372.9 1136.2,362.3 1133.9,360 1129,351 1126.9,346.8 1114.4,353.8 1113,351 1108.8,344 1101.9,330.1 1101.5,325.5 1108.8,324.6 1110.9,320.4 1108.8,313.4 1105.3,307.9 1106,294 1104.6,289 1100.5,286 1101,280 1099.1,274.5" fill="#fdf6ec"/>
<polygon points="1099.1,274.5 1113.9,271.9 1122.5,270.2 1129.3,266 1132.8,254 1146.4,248.8 1149.9,242 1158.4,230 1163.6,223.2 1182.4,238.6 1180.7,252.3 1163.6,257.4 1156.7,267.7 1151.6,277.9 1143,276.2 1134.5,291.6 1106,294 1104.6,289 1100.5,286 1101,280" fill="#fdf2e3" stroke="#c9c0b3" stroke-width="0.7" stroke-linejoin="round"/>
<polygon points="1106,294 1134.5,291.6 1143,276.2 1161.8,277.9 1167,288.2 1168.7,301.9 1184.1,307 1191,313.9 1189,322 1168,329.7 1162.7,327 1153.9,337.6 1143.3,335 1135.2,337.1 1122.7,335.7 1114.4,332.9 1101.9,327.4 1101.5,325.5 1108.8,324.6 1110.9,320.4 1108.8,313.4 1105.3,307.9" fill="#fde8cc" stroke="#c9c0b3" stroke-width="0.7" stroke-linejoin="round"/>
<polygon points="1241.4,188.8 1291.6,187.2 1295,190.7 1296.7,198.4 1301.9,201.8 1308.7,210.3 1309.6,214.6 1315.5,218 1320.7,225.7 1324.1,230 1325.8,236.9 1332.7,245.4 1337.8,247.1 1341.2,255.7 1338.6,260.8 1336.1,271.1 1346.3,272.8 1339.5,276.2 1339.5,283 1329.2,283.9 1317.3,277.9 1303.6,271.9 1295,263.4 1289.9,260.8 1275.1,260.2 1273.5,257 1268.7,249 1262.3,244.2 1260.7,239.4 1262.3,232.9 1278.3,234.5 1280,228.1 1275.1,220.1 1260.7,219.3 1252.7,215.3 1242.2,199.3" fill="#fdfbf7" stroke="#c9c0b3" stroke-width="0.7" stroke-linejoin="round"/>
<polygon points="1230.2,188.8 1241.4,188.8 1242.2,199.3 1252.7,215.3 1260.7,219.3 1275.1,220.1 1280,228.1 1278.3,234.5 1262.3,232.9 1260.7,239.4 1262.3,244.2 1268.7,249 1273.5,257 1275.1,260.2 1265.5,263.4 1254.3,271.4 1249.5,273.1 1246.3,263.4 1244.7,253.8 1236.6,258.6 1233.4,253.8 1235,242.6 1227,229.7 1219,231.3 1214.2,226.5 1207.8,224.9 1214.2,218.5 1230.2,213.7" fill="#fdf0de" stroke="#c9c0b3" stroke-width="0.7" stroke-linejoin="round"/>
<polygon points="1167,216.3 1173.8,200.9 1180.7,197.5 1197.8,195 1206.3,198.4 1228.6,193.2 1229.4,188.1 1230.2,188.8 1230.2,213.7 1214.2,218.5 1207.8,224.9 1214.2,226.5 1219,231.3 1227,229.7 1222.2,234.5 1219,242.6 1211,244.2 1198.1,247.4 1196.5,252.2 1201.3,260.2 1194.9,269.8 1184.5,273.1 1188.5,279.5 1193.3,284.3 1186.9,298.7 1193.3,301.9 1184.2,308.6 1184.1,307 1168.7,301.9 1167,288.2 1161.8,277.9 1151.6,277.9 1156.7,267.7 1163.6,257.4 1180.7,252.3 1182.4,238.6 1163.6,223.2" fill="#fdfbf8" stroke="#c9c0b3" stroke-width="0.7" stroke-linejoin="round"/>
<polygon points="1227,229.7 1231.8,234.5 1235,242.6 1233.4,253.8 1236.6,258.6 1234.2,266.6 1240.6,274.7 1231.8,282.7 1230.2,297.1 1220.6,305.1 1212.6,308.3 1201.3,316.4 1196.5,311.6 1193.3,301.9 1186.9,298.7 1193.3,284.3 1188.5,279.5 1184.5,273.1 1194.9,269.8 1201.3,260.2 1196.5,252.2 1198.1,247.4 1211,244.2 1219,242.6 1222.2,234.5" fill="#fce0ba" stroke="#c9c0b3" stroke-width="0.7" stroke-linejoin="round"/>
<polygon points="1162,335.9 1165.4,325.7 1168.8,330 1191,318.8 1184.2,308.6 1192.8,303.4 1196.5,311.6 1201.3,316.4 1212.6,308.3 1220.6,305.1 1230.2,297.1 1231.8,282.7 1240.6,274.7 1234.2,266.6 1236.6,258.6 1244.7,253.8 1246.3,263.4 1249.5,273.1 1254.3,271.4 1265.5,263.4 1275.1,260.2 1268.7,263.4 1270.3,276.3 1260.7,290.7 1268.7,295.5 1275.1,306.7 1278.3,319.6 1259.5,327.4 1245.8,327.4 1237.3,335.9 1215,336.8 1215,346.2 1204.8,337.6 1192.8,337.6 1172.2,341" fill="#fdf4e8" stroke="#c9c0b3" stroke-width="0.7" stroke-linejoin="round"/>
<polygon points="1275.1,260.2 1289.9,260.8 1295,263.4 1303.6,271.9 1317.3,277.9 1329.2,283.9 1339.5,283 1339.5,276.2 1346.3,272.8 1349.8,277.9 1349.8,295 1354.9,301.9 1359.2,308.7 1349.8,319 1345,325 1342.9,330.6 1321.8,335.9 1290,337.6 1288.2,323.5 1278.3,319.6 1275.1,306.7 1268.7,295.5 1260.7,290.7 1270.3,276.3 1268.7,263.4" fill="#fdf0df" stroke="#c9c0b3" stroke-width="0.7" stroke-linejoin="round"/>
<polygon points="1129,351 1126.9,346.8 1134.5,344 1135.2,337.1 1143.3,335 1153.9,337.6 1162,335.9 1172.2,341 1192.8,337.6 1204.8,337.6 1215,346.2 1215,336.8 1237.3,341.1 1228.7,368.4 1206.5,373.6 1208.2,399.2 1198,399.2 1191,389 1186,389 1175.7,392.4 1175,392.3 1164.4,399.4 1155.6,397.6 1148.6,388.8 1138,383.5 1134.4,378.2 1145,376.4 1139.7,372.9 1136.2,362.3 1130.9,355.3" fill="#fdf9f2" stroke="#c9c0b3" stroke-width="0.7" stroke-linejoin="round"/>
<polygon points="1215,336.8 1237.3,341.1 1228.7,368.4 1206.5,373.6 1208.2,399.2 1221.9,404.4 1230.4,412.9 1245.8,402.7 1261.2,402.7 1268.1,395.8 1269.8,380.4 1276.6,368.4 1273.2,347.9 1259.5,327.4 1245.8,327.4 1237.3,335.9" fill="#fdefdc" stroke="#c9c0b3" stroke-width="0.7" stroke-linejoin="round"/>
<polygon points="1256.5,325.3 1288.2,323.5 1290,337.6 1321.8,335.9 1320,351.8 1312.9,365.9 1307.6,381.8 1318.2,397.6 1328.8,406.5 1318.2,415.3 1307.6,424.1 1297,431.2 1282.9,418.8 1277.6,404.7 1265.3,408.2 1265.3,395.9 1272.4,385.3 1267,372.9 1275.9,360.6 1272.4,344.7 1258.2,327" fill="#fdeacf" stroke="#c9c0b3" stroke-width="0.7" stroke-linejoin="round"/>
<polygon points="1321.8,335.9 1342.9,330.6 1337.6,339.4 1337.6,344.7 1350,341.2 1360.6,330.6 1367.6,325.3 1374.7,324.4 1376.5,330.6 1373.8,351.8 1369.4,357 1360.6,358 1351.8,362.4 1347.3,367.6 1346.5,390.6 1339.4,394.1 1328.8,406.5 1318.2,397.6 1307.6,381.8 1312.9,365.9 1320,351.8" fill="#fdf8f0" stroke="#c9c0b3" stroke-width="0.7" stroke-linejoin="round"/>
<polygon points="1175.7,392.4 1186,389 1191,389 1198,399.2 1208.2,399.2 1221.9,404.4 1230.4,412.9 1228.7,445.5 1190.9,427.6 1173.3,425.8 1174.1,416.1 1187.4,411.7 1175,408.2 1168,402.9 1173.3,399.4 1175,392.3" fill="#fdf2e2" stroke="#c9c0b3" stroke-width="0.7" stroke-linejoin="round"/>
<polygon points="1230.4,412.9 1245.8,402.7 1261.2,402.7 1265.3,408.2 1277.6,404.7 1282.9,418.8 1297,431.2 1290,440 1282.9,443.5 1279.4,454.1 1272.4,466.5 1267,468.2 1238,450.5 1228.7,445.5" fill="#fdf8f0" stroke="#c9c0b3" stroke-width="0.7" stroke-linejoin="round"/>
<polygon points="1101.9,327.4 1114.4,332.9 1122.7,335.7 1135.2,337.1 1134.5,344 1126.9,346.8 1114.4,353.8 1113,351 1108.8,344 1101.9,330.1" fill="#f7b463" stroke="#c9c0b3" stroke-width="0.7" stroke-linejoin="round"/>
<polygon points="1101.5,325.5 1104,324.6 1108.8,324.6 1112,328.5 1115.5,332 1114.4,332.9 1101.9,327.4" fill="#b00d0d" stroke="#c9c0b3" stroke-width="0.7" stroke-linejoin="round"/>
<polygon points="1100.2,274.5 1113.9,271.9 1122.5,270.2 1129.3,266 1132.8,254 1146.4,248.8 1149.9,242 1158.4,230 1167,216.3 1173.8,200.9 1180.7,197.5 1197.8,195 1206.3,198.4 1228.6,193.2 1229.4,188.1 1238,187.2 1291.6,187.2 1295,190.7 1296.7,198.4 1301.9,201.8 1308.7,210.3 1309.6,214.6 1315.5,218 1320.7,225.7 1324.1,230 1325.8,236.9 1332.7,245.4 1337.8,247.1 1341.2,255.7 1338.6,260.8 1336.1,271.1 1346.3,272.8 1349.8,277.9 1349.8,295 1354.9,301.9 1359.2,308.7 1349.8,319 1345,325 1342.9,330.6 1337.6,339.4 1337.6,344.7 1350,341.2 1360.6,330.6 1367.6,325.3 1374.7,324.4 1376.5,330.6 1373.8,351.8 1369.4,357 1360.6,358 1351.8,362.4 1347.3,367.6 1346.5,390.6 1339.4,394.1 1328.8,406.5 1318.2,415.3 1307.6,424.1 1297,431.2 1290,440 1282.9,443.5 1279.4,454.1 1272.4,466.5 1267,468.2 1238,450.5 1190.9,427.6 1173.3,425.8 1174.1,416.1 1187.4,411.7 1175,408.2 1168,402.9 1173.3,399.4 1175,392.3 1164.4,399.4 1155.6,397.6 1148.6,388.8 1138,383.5 1134.4,378.2 1145,376.4 1139.7,372.9 1136.2,362.3 1133.9,360 1129,351 1126.9,346.8 1114.4,353.8 1113,351 1108.8,344 1101.9,330.1 1101.5,325.5 1108.8,324.6 1110.9,320.4 1108.8,313.4 1105.3,307.9 1106,294 1104.6,289 1100.5,286 1101,280 1099.1,274.5" fill="none" stroke="#4f5a5c" stroke-width="0.9" stroke-linejoin="round"/>
<polygon points="1134.4,410 1145,406.4 1157.4,403.8 1166.2,404.7 1173.3,410 1173.3,416.1 1170.6,422.3 1169.7,425.8 1164.4,422.3 1152.1,415.3" fill="#e3e3e6"/>
<polyline points="1101,288.5 1110,288 1118,286 1127,285.6" fill="none" stroke="#5f7f83" stroke-width="1.8" stroke-linejoin="round"/>
<polyline points="1114,289 1121,291.5 1131,293.3" fill="none" stroke="#5f7f83" stroke-width="1.4"/>
<polygon points="1108,323 1114,319.5 1121.3,316.5 1129,316 1134,316.5 1141,319 1133,320.5 1125,322.5 1118,327 1114,331 1108.5,326.5" fill="#5f7f83"/>
<polyline points="1114,310 1118,317" fill="none" stroke="#5f7f83" stroke-width="1.2"/>
<polyline points="1119,309 1124,316" fill="none" stroke="#5f7f83" stroke-width="1.2"/>
<polyline points="1137,311 1132,317" fill="none" stroke="#5f7f83" stroke-width="1.2"/>
<polyline points="1375,324.4 1384,322.5 1394,321.5" fill="none" stroke="#4f5a5c" stroke-width="0.9"/>
</g>
<rect x="1081.5" y="168.5" width="312" height="313" rx="3" fill="none" stroke="#7f8f94" stroke-width="1"/>
<text x="1086.8" y="514.9" font-size="10.4" fill="#444444" font-weight="400">MPOX OUTBREAK CASES BY DISTRICT</text>
<rect x="1196.1" y="532.6" width="148" height="14" fill="#b00000"/>
<text x="1186.4" y="545.6" font-size="12.5" fill="#5a1a0a" font-weight="400" text-anchor="end" letter-spacing="0.2">Western Urban</text>
<text x="1349.8999999999999" y="545.6" font-size="12.2" fill="#444444" font-weight="400" letter-spacing="0.2">2125</text>
<rect x="1196.1" y="554.4" width="54" height="14" fill="#f5b060"/>
<text x="1186.4" y="567.4300000000001" font-size="12.5" fill="#6a4a2a" font-weight="400" text-anchor="end" letter-spacing="0.2">Western Rural</text>
<text x="1255.8999999999999" y="567.4300000000001" font-size="12.2" fill="#444444" font-weight="400" letter-spacing="0.2">717</text>
<rect x="1196.1" y="576.3" width="14.7" height="14" fill="#f6d6a6"/>
<text x="1186.4" y="589.26" font-size="12.5" fill="#666666" font-weight="400" text-anchor="end" letter-spacing="0.2">Bombali</text>
<text x="1216.6" y="589.26" font-size="12.2" fill="#444444" font-weight="400" letter-spacing="0.2">199</text>
<rect x="1196.1" y="598.1" width="9.3" height="14" fill="#f3dec2"/>
<text x="1186.4" y="611.09" font-size="12.5" fill="#666666" font-weight="400" text-anchor="end" letter-spacing="0.2">Port Loko</text>
<text x="1211.1999999999998" y="611.09" font-size="12.2" fill="#444444" font-weight="400" letter-spacing="0.2">114</text>
<rect x="1196.1" y="619.9" width="9.3" height="14" fill="#f2dfc6"/>
<text x="1186.4" y="632.9200000000001" font-size="12.5" fill="#666666" font-weight="400" text-anchor="end" letter-spacing="0.2">Kenema</text>
<text x="1211.1999999999998" y="632.9200000000001" font-size="12.2" fill="#444444" font-weight="400" letter-spacing="0.2">96</text>
<rect x="1196.1" y="641.8" width="9.2" height="14" fill="#f1e2cf"/>
<text x="1186.4" y="654.75" font-size="12.5" fill="#666666" font-weight="400" text-anchor="end" letter-spacing="0.2">Kono</text>
<text x="1211.1" y="654.75" font-size="12.2" fill="#444444" font-weight="400" letter-spacing="0.2">56</text>
<rect x="1196.1" y="663.6" width="9.2" height="14" fill="#f1e3d1"/>
<text x="1186.4" y="676.58" font-size="12.5" fill="#666666" font-weight="400" text-anchor="end" letter-spacing="0.2">Bo</text>
<text x="1211.1" y="676.58" font-size="12.2" fill="#444444" font-weight="400" letter-spacing="0.2">52</text>
<rect x="1196.1" y="685.4" width="9" height="14" fill="#f0e4d5"/>
<text x="1186.4" y="698.4100000000001" font-size="12.5" fill="#666666" font-weight="400" text-anchor="end" letter-spacing="0.2">Koinadugu</text>
<text x="1210.8999999999999" y="698.4100000000001" font-size="12.2" fill="#444444" font-weight="400" letter-spacing="0.2">38</text>
<rect x="1196.1" y="707.2" width="9" height="14" fill="#f0e5d7"/>
<text x="1186.4" y="720.24" font-size="12.5" fill="#666666" font-weight="400" text-anchor="end" letter-spacing="0.2">Bonthe</text>
<text x="1210.8999999999999" y="720.24" font-size="12.2" fill="#444444" font-weight="400" letter-spacing="0.2">37</text>
<rect x="1196.1" y="729.1" width="9" height="14" fill="#f0e6d9"/>
<text x="1186.4" y="742.0699999999999" font-size="12.5" fill="#666666" font-weight="400" text-anchor="end" letter-spacing="0.2">Kambia</text>
<text x="1210.8999999999999" y="742.0699999999999" font-size="12.2" fill="#444444" font-weight="400" letter-spacing="0.2">31</text>
<rect x="1196.1" y="750.9" width="8.8" height="14" fill="#efe7dc"/>
<text x="1186.4" y="763.9" font-size="12.5" fill="#666666" font-weight="400" text-anchor="end" letter-spacing="0.2">Tonkolili</text>
<text x="1210.6999999999998" y="763.9" font-size="12.2" fill="#444444" font-weight="400" letter-spacing="0.2">26</text>
<rect x="1196.1" y="772.7" width="8.5" height="14" fill="#efe8df"/>
<text x="1186.4" y="785.73" font-size="12.5" fill="#666666" font-weight="400" text-anchor="end" letter-spacing="0.2">Kailahun</text>
<text x="1210.3999999999999" y="785.73" font-size="12.2" fill="#444444" font-weight="400" letter-spacing="0.2">15</text>
<rect x="1196.1" y="794.6" width="8.5" height="14" fill="#efe8e0"/>
<text x="1186.4" y="807.56" font-size="12.5" fill="#666666" font-weight="400" text-anchor="end" letter-spacing="0.2">Moyamba</text>
<text x="1210.3999999999999" y="807.56" font-size="12.2" fill="#444444" font-weight="400" letter-spacing="0.2">14</text>
<rect x="1196.1" y="816.4" width="8.3" height="14" fill="#efe9e2"/>
<text x="1186.4" y="829.39" font-size="12.5" fill="#666666" font-weight="400" text-anchor="end" letter-spacing="0.2">Pujehun</text>
<text x="1210.1999999999998" y="829.39" font-size="12.2" fill="#444444" font-weight="400" letter-spacing="0.2">11</text>
<rect x="1196.1" y="838.2" width="8" height="14" fill="#efeae4"/>
<text x="1186.4" y="851.22" font-size="12.5" fill="#666666" font-weight="400" text-anchor="end" letter-spacing="0.2">Karene</text>
<text x="1209.8999999999999" y="851.22" font-size="12.2" fill="#444444" font-weight="400" letter-spacing="0.2">7</text>
<rect x="0" y="92" width="1" height="818" fill="#9a9a9a"/>
<rect x="1" y="92" width="3" height="818" fill="#e2e2e2"/>
<path d="M0 931 L0 935 L4 935 A4 4 0 0 1 0 931 Z" fill="#000"/>
<path d="M1500 931 L1500 935 L1496 935 A4 4 0 0 0 1500 931 Z" fill="#000"/>
</svg>
</body></html>
